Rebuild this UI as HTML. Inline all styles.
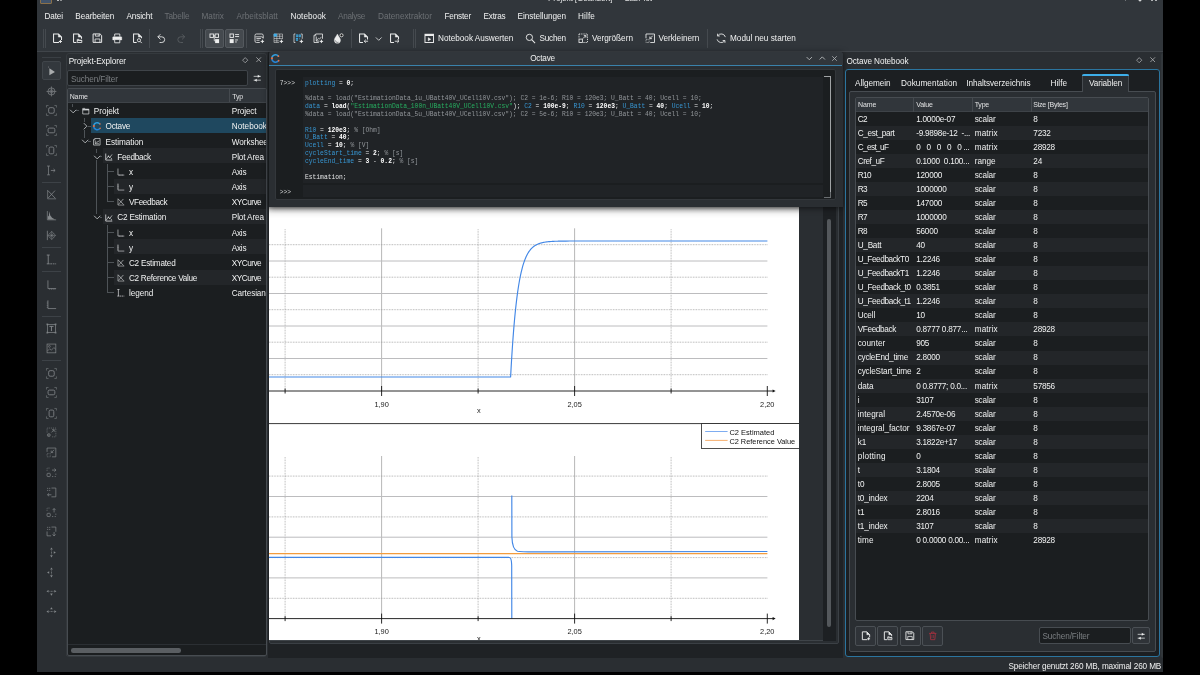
<!DOCTYPE html>
<html><head><meta charset="utf-8"><title>LabPlot</title>
<style>
html,body{margin:0;padding:0;}
body{width:1200px;height:675px;background:#000;overflow:hidden;position:relative;font-family:"Liberation Sans",sans-serif;}
div{position:absolute;box-sizing:border-box;}
svg{position:absolute;overflow:visible;}
.t{position:absolute;white-space:pre;line-height:12px;height:12px;font-family:"Liberation Sans",sans-serif;}
.m{position:absolute;white-space:pre;font-family:"Liberation Mono",monospace;font-size:6.3px;line-height:8px;height:8px;color:#fcfcfc;}

</style></head>
<body>
<div id="gs" style="left:0;top:0;width:1200px;height:675px;will-change:transform;">
<div style="left:37px;top:0px;width:1126px;height:672px;background:#2a2e32;"></div>
<div style="left:37px;top:0px;width:1126px;height:51px;background:#31363b;"></div>
<div style="left:37px;top:51px;width:1126px;height:1px;background:#40454a;"></div>
<span class="t" style="right:38.80px;top:660.50px;font-size:8.2px;color:#f0f1f1;letter-spacing:-0.121px;">Speicher genutzt 260 MB, maximal 260 MB</span>
<div style="left:42px;top:57px;width:19px;height:1px;background:#3a3f44;"></div>
<div style="left:42px;top:61px;width:19px;height:19px;background:#33383d;border:1px solid #40454a;border-radius:2px;"></div>
<div style="left:42px;top:181.5px;width:19px;height:1px;background:#3d4247;"></div>
<div style="left:42px;top:246.5px;width:19px;height:1px;background:#3d4247;"></div>
<div style="left:42px;top:271.0px;width:19px;height:1px;background:#3d4247;"></div>
<div style="left:42px;top:315.5px;width:19px;height:1px;background:#3d4247;"></div>
<div style="left:42px;top:359.5px;width:19px;height:1px;background:#3d4247;"></div>
<div style="left:66px;top:52.5px;width:201px;height:604.5px;background:#2a2e32;border:1px solid #353a3e;border-radius:3px;"></div>
<span class="t" style="left:68.70px;top:55.60px;font-size:8.2px;color:#f0f1f1;letter-spacing:-0.086px;">Projekt-Explorer</span>
<div style="left:66.8px;top:69.6px;width:181.4px;height:16.8px;background:#1b1e20;border:1px solid #3f4449;border-radius:2px;"></div>
<span class="t" style="left:71.00px;top:73.60px;font-size:8.2px;color:#7b7f82;letter-spacing:-0.106px;">Suchen/Filter</span>
<div style="left:66.5px;top:88.2px;width:200.5px;height:568.3px;background:#1b1e20;border:1px solid #474c51;border-radius:2px;overflow:hidden;"></div>
<div style="left:67.5px;top:88.9px;width:198.5px;height:14.2px;background:#31363b;border-bottom:1px solid #3e4348;"></div>
<div style="left:229px;top:88.9px;width:1px;height:13.4px;background:#454a4f;"></div>
<span class="t" style="left:69.70px;top:90.60px;font-size:7.0px;color:#e0e1e2;letter-spacing:-0.121px;">Name</span>
<span class="t" style="left:232.30px;top:90.60px;font-size:7.0px;color:#e0e1e2;letter-spacing:-0.190px;">Typ</span>
<div style="left:65.5px;top:66px;width:1px;height:590px;background:#33373b;"></div>
<div style="left:1161px;top:52.5px;width:2px;height:605px;background:#32373b;border-radius:2px 0 0 2px;"></div>
<div style="left:40px;top:-1px;width:12.2px;height:4.6px;background:#41536a;border:1px solid #8a7049;border-radius:0 0 1px 1px;"></div>
<div style="left:57px;top:0px;width:1.6px;height:1.2px;background:#b9bbbc;"></div>
<div style="left:60.4px;top:0px;width:1.2px;height:1px;background:#8f9294;"></div>
<div style="left:500px;top:0;width:200px;height:4px;overflow:hidden;">
<span class="t" style="left:48.00px;top:-7.30px;font-size:8.2px;color:#dfe0e1;letter-spacing:-0.111px;">Projekt [Geändert] — LabPlot</span>
</div>
<div style="left:1125.2px;top:0px;width:1px;height:0.8px;background:#6f7376;"></div>
<svg style="left:1136px;top:-4px;" width="8" height="6" viewBox="0 0 8 6"><path d="M1 2 L4 5 L7 2" fill="none" stroke="#d5d7d8" stroke-width="1.2"/></svg>
<div style="left:1151.3px;top:0px;width:1.3px;height:1px;background:#b0b3b5;"></div>
<div style="left:1155.3px;top:0px;width:1.3px;height:1px;background:#b0b3b5;"></div>
<span class="t" style="left:44.50px;top:10.80px;font-size:8.2px;color:#f0f1f1;letter-spacing:-0.129px;">Datei</span>
<span class="t" style="left:75.30px;top:10.80px;font-size:8.2px;color:#f0f1f1;letter-spacing:-0.066px;">Bearbeiten</span>
<span class="t" style="left:126.40px;top:10.80px;font-size:8.2px;color:#f0f1f1;letter-spacing:-0.113px;">Ansicht</span>
<span class="t" style="left:164.50px;top:10.80px;font-size:8.2px;color:#6c7074;letter-spacing:-0.141px;">Tabelle</span>
<span class="t" style="left:201.50px;top:10.80px;font-size:8.2px;color:#6c7074;letter-spacing:0.030px;">Matrix</span>
<span class="t" style="left:236.50px;top:10.80px;font-size:8.2px;color:#6c7074;letter-spacing:0.040px;">Arbeitsblatt</span>
<span class="t" style="left:290.50px;top:10.80px;font-size:8.2px;color:#f0f1f1;letter-spacing:0.050px;">Notebook</span>
<span class="t" style="left:338.00px;top:10.80px;font-size:8.2px;color:#6c7074;letter-spacing:-0.310px;">Analyse</span>
<span class="t" style="left:378.00px;top:10.80px;font-size:8.2px;color:#6c7074;letter-spacing:0.016px;">Datenextraktor</span>
<span class="t" style="left:444.50px;top:10.80px;font-size:8.2px;color:#f0f1f1;letter-spacing:-0.186px;">Fenster</span>
<span class="t" style="left:483.50px;top:10.80px;font-size:8.2px;color:#f0f1f1;letter-spacing:-0.207px;">Extras</span>
<span class="t" style="left:517.50px;top:10.80px;font-size:8.2px;color:#f0f1f1;letter-spacing:-0.057px;">Einstellungen</span>
<span class="t" style="left:578.00px;top:10.80px;font-size:8.2px;color:#f0f1f1;letter-spacing:0.119px;">Hilfe</span>
<div style="left:43px;top:28.5px;width:1px;height:19px;background:#454a4f;"></div>
<div style="left:45px;top:28.5px;width:1px;height:19px;background:#454a4f;"></div>
<div style="left:199.8px;top:28.5px;width:1px;height:19px;background:#454a4f;"></div>
<div style="left:201.9px;top:28.5px;width:1px;height:19px;background:#454a4f;"></div>
<div style="left:413px;top:28.5px;width:1px;height:19px;background:#454a4f;"></div>
<div style="left:415px;top:28.5px;width:1px;height:19px;background:#454a4f;"></div>
<div style="left:149.0px;top:28.5px;width:1px;height:19px;background:#454a4f;"></div>
<div style="left:245.8px;top:28.5px;width:1px;height:19px;background:#454a4f;"></div>
<div style="left:350.5px;top:28.5px;width:1px;height:19px;background:#454a4f;"></div>
<div style="left:707.0px;top:28.5px;width:1px;height:19px;background:#454a4f;"></div>
<div style="left:205px;top:28.7px;width:19px;height:19px;background:#44494e;border:1px solid #54595e;border-radius:2px;"></div>
<div style="left:224.8px;top:28.7px;width:19px;height:19px;background:#44494e;border:1px solid #54595e;border-radius:2px;"></div>
<span class="t" style="left:438.00px;top:32.90px;font-size:8.2px;color:#f0f1f1;letter-spacing:-0.010px;">Notebook Auswerten</span>
<span class="t" style="left:539.50px;top:32.90px;font-size:8.2px;color:#f0f1f1;letter-spacing:-0.219px;">Suchen</span>
<span class="t" style="left:592.00px;top:32.90px;font-size:8.2px;color:#f0f1f1;letter-spacing:-0.002px;">Vergrößern</span>
<span class="t" style="left:658.40px;top:32.90px;font-size:8.2px;color:#f0f1f1;letter-spacing:-0.002px;">Verkleinern</span>
<span class="t" style="left:730.00px;top:32.90px;font-size:8.2px;color:#f0f1f1;letter-spacing:0.021px;">Modul neu starten</span>
<div style="left:67.5px;top:103px;width:198.5px;height:540px;overflow:hidden;">
<div style="left:23.5px;top:14.920000000000002px;width:175.0px;height:15.17px;background:#1f485f;"></div>
<div style="left:35.19999999999999px;top:45.25999999999999px;width:163.3px;height:15.17px;background:#232629;"></div>
<div style="left:46.89999999999999px;top:75.6px;width:151.60000000000002px;height:15.17px;background:#232629;"></div>
<div style="left:35.19999999999999px;top:105.94px;width:163.3px;height:15.17px;background:#232629;"></div>
<div style="left:46.89999999999999px;top:136.28px;width:151.60000000000002px;height:15.17px;background:#232629;"></div>
<div style="left:46.89999999999999px;top:166.62px;width:151.60000000000002px;height:15.17px;background:#232629;"></div>
</div>
<span class="t" style="left:93.80px;top:106.28px;font-size:8.2px;color:#f0f1f1;letter-spacing:-0.051px;">Projekt</span>
<span class="t" style="left:105.50px;top:121.45px;font-size:8.2px;color:#f0f1f1;letter-spacing:-0.217px;">Octave</span>
<span class="t" style="left:105.50px;top:136.62px;font-size:8.2px;color:#f0f1f1;letter-spacing:-0.044px;">Estimation</span>
<span class="t" style="left:117.20px;top:151.79px;font-size:8.2px;color:#f0f1f1;letter-spacing:-0.283px;">Feedback</span>
<span class="t" style="left:128.90px;top:166.97px;font-size:8.2px;color:#f0f1f1;">x</span>
<span class="t" style="left:128.90px;top:182.13px;font-size:8.2px;color:#f0f1f1;">y</span>
<span class="t" style="left:128.90px;top:197.30px;font-size:8.2px;color:#f0f1f1;letter-spacing:-0.354px;">VFeedback</span>
<span class="t" style="left:117.20px;top:212.47px;font-size:8.2px;color:#f0f1f1;letter-spacing:-0.162px;">C2 Estimation</span>
<span class="t" style="left:128.90px;top:227.65px;font-size:8.2px;color:#f0f1f1;">x</span>
<span class="t" style="left:128.90px;top:242.81px;font-size:8.2px;color:#f0f1f1;">y</span>
<span class="t" style="left:128.90px;top:257.98px;font-size:8.2px;color:#f0f1f1;letter-spacing:-0.214px;">C2 Estimated</span>
<span class="t" style="left:128.90px;top:273.15px;font-size:8.2px;color:#f0f1f1;letter-spacing:-0.271px;">C2 Reference Value</span>
<span class="t" style="left:128.90px;top:288.32px;font-size:8.2px;color:#f0f1f1;letter-spacing:-0.019px;">legend</span>
<div style="left:229.5px;top:103.5px;width:36.5px;height:200px;overflow:hidden;">
<span class="t" style="left:2.30px;top:2.78px;font-size:8.2px;color:#f0f1f1;letter-spacing:-0.109px;">Project</span>
<span class="t" style="left:2.30px;top:17.95px;font-size:8.2px;color:#f0f1f1;letter-spacing:0.017px;">Notebook</span>
<span class="t" style="left:2.30px;top:33.12px;font-size:8.2px;color:#f0f1f1;letter-spacing:-0.087px;">Worksheet</span>
<span class="t" style="left:2.30px;top:48.29px;font-size:8.2px;color:#f0f1f1;letter-spacing:-0.122px;">Plot Area</span>
<span class="t" style="left:2.30px;top:63.47px;font-size:8.2px;color:#f0f1f1;letter-spacing:-0.263px;">Axis</span>
<span class="t" style="left:2.30px;top:78.63px;font-size:8.2px;color:#f0f1f1;letter-spacing:-0.263px;">Axis</span>
<span class="t" style="left:2.30px;top:93.80px;font-size:8.2px;color:#f0f1f1;letter-spacing:-0.500px;">XYCurve</span>
<span class="t" style="left:2.30px;top:108.97px;font-size:8.2px;color:#f0f1f1;letter-spacing:-0.122px;">Plot Area</span>
<span class="t" style="left:2.30px;top:124.15px;font-size:8.2px;color:#f0f1f1;letter-spacing:-0.263px;">Axis</span>
<span class="t" style="left:2.30px;top:139.31px;font-size:8.2px;color:#f0f1f1;letter-spacing:-0.263px;">Axis</span>
<span class="t" style="left:2.30px;top:154.48px;font-size:8.2px;color:#f0f1f1;letter-spacing:-0.500px;">XYCurve</span>
<span class="t" style="left:2.30px;top:169.65px;font-size:8.2px;color:#f0f1f1;letter-spacing:-0.500px;">XYCurve</span>
<span class="t" style="left:2.30px;top:184.82px;font-size:8.2px;color:#f0f1f1;letter-spacing:-0.131px;">CartesianPlotLegend</span>
</div>
<div style="left:72.3px;top:103.5px;width:1px;height:3.0px;background:#4e5357;"></div>
<div style="left:76px;top:110.335px;width:2.5px;height:1px;background:#4e5357;"></div>
<div style="left:84.1px;top:118.42px;width:1px;height:3.5849999999999937px;background:#4e5357;"></div>
<div style="left:84.1px;top:130.005px;width:1px;height:7.670000000000016px;background:#4e5357;"></div>
<div style="left:88px;top:125.505px;width:2.5px;height:1px;background:#4e5357;"></div>
<div style="left:88px;top:140.675px;width:2.5px;height:1px;background:#4e5357;"></div>
<div style="left:95.9px;top:148.76px;width:1px;height:4.085000000000008px;background:#4e5357;"></div>
<div style="left:95.9px;top:160.345px;width:1px;height:53.18000000000001px;background:#4e5357;"></div>
<div style="left:99.7px;top:155.845px;width:2.299999999999997px;height:1px;background:#4e5357;"></div>
<div style="left:99.7px;top:216.525px;width:2.299999999999997px;height:1px;background:#4e5357;"></div>
<div style="left:107.4px;top:163.93px;width:1px;height:37.92499999999998px;background:#4e5357;"></div>
<div style="left:107.9px;top:171.01500000000001px;width:5.8999999999999915px;height:1px;background:#4e5357;"></div>
<div style="left:107.9px;top:186.185px;width:5.8999999999999915px;height:1px;background:#4e5357;"></div>
<div style="left:107.9px;top:201.355px;width:5.8999999999999915px;height:1px;background:#4e5357;"></div>
<div style="left:107.4px;top:224.61px;width:1px;height:68.26499999999993px;background:#4e5357;"></div>
<div style="left:107.9px;top:231.69500000000002px;width:5.8999999999999915px;height:1px;background:#4e5357;"></div>
<div style="left:107.9px;top:246.865px;width:5.8999999999999915px;height:1px;background:#4e5357;"></div>
<div style="left:107.9px;top:262.03499999999997px;width:5.8999999999999915px;height:1px;background:#4e5357;"></div>
<div style="left:107.9px;top:277.205px;width:5.8999999999999915px;height:1px;background:#4e5357;"></div>
<div style="left:107.9px;top:292.37499999999994px;width:5.8999999999999915px;height:1px;background:#4e5357;"></div>
<div style="left:67.5px;top:644px;width:198.5px;height:1px;background:#2b2f33;"></div>
<div style="left:71px;top:648.3px;width:109.6px;height:4.4px;background:#5a5e62;border-radius:2.2px;"></div>
<div style="left:268px;top:52px;width:575px;height:606px;background:#1f2225;"></div>
<div style="left:268.5px;top:66px;width:570px;height:578px;background:#2a2e32;border:1px solid #3b4045;border-radius:0 0 2px 2px;"></div>
<div style="left:269px;top:66px;width:567px;height:575px;background:#2a2e32;border:1px solid #3f4449;"></div>
<div style="left:269px;top:207px;width:530.2px;height:433.4px;background:#ffffff;"></div>
<div style="left:823px;top:207px;width:12.5px;height:433.5px;background:#1d2023;"></div>
<div style="left:826.6px;top:219px;width:4.6px;height:408px;background:#54585c;border-radius:2.3px;"></div>
<div style="left:268.5px;top:52px;width:574px;height:155px;background:#2a2e32;box-shadow:0 1px 6px rgba(0,0,0,0.6);border-radius:2px 2px 0 0;"></div>
<div style="left:268.5px;top:52px;width:574px;height:13px;background:#31363b;border-radius:2px 2px 0 0;"></div>
<div style="left:269px;top:64.6px;width:573.3px;height:1.5px;background:#3a82ab;"></div>
<span class="t" style="left:530.20px;top:53.30px;font-size:8.2px;color:#f0f1f1;letter-spacing:-0.213px;">Octave</span>
<div style="left:275px;top:69px;width:560.5px;height:131px;background:#1b1e20;border:1px solid #33373b;border-radius:2px;"></div>
<div style="left:303px;top:77px;width:519.5px;height:106.3px;background:#202326;"></div>
<div style="left:303px;top:185px;width:519.5px;height:12px;background:#202326;"></div>
<div style="left:824px;top:76px;width:7px;height:122px;border:1px solid #a0a3a5;border-left:none;border-bottom:none;"></div>
<div style="left:824px;top:191.5px;width:7px;height:6.5px;border-bottom:1px solid #6a6e71;border-right:1px solid #6a6e71;"></div>
<span class="m" style="left:305.0px;top:79.50px;"><span style="color:#3796d2;">plotting</span><span style="color:#e2e3e4;"> = </span><span style="color:#ffffff;font-weight:bold;">0</span><span style="color:#e2e3e4;">;</span></span>
<span class="m" style="left:305.0px;top:95.20px;"><span style="color:#92969a;">%data = load(&quot;EstimationData_1u_UBatt40V_UCell10V.csv&quot;); C2 = 1e-6; R10 = 120e3; U_Batt = 40; Ucell = 10;</span></span>
<span class="m" style="left:305.0px;top:103.05px;"><span style="color:#3796d2;">data</span><span style="color:#e2e3e4;"> = </span><span style="color:#ffffff;font-weight:bold;">load</span><span style="color:#e2e3e4;">(</span><span style="color:#27ae60;">&quot;EstimationData_100n_UBatt40V_UCell10V.csv&quot;</span><span style="color:#e2e3e4;">); </span><span style="color:#3796d2;">C2</span><span style="color:#e2e3e4;"> = </span><span style="color:#ffffff;font-weight:bold;">100e-9</span><span style="color:#e2e3e4;">; </span><span style="color:#3796d2;">R10</span><span style="color:#e2e3e4;"> = </span><span style="color:#ffffff;font-weight:bold;">120e3</span><span style="color:#e2e3e4;">; </span><span style="color:#3796d2;">U_Batt</span><span style="color:#e2e3e4;"> = </span><span style="color:#ffffff;font-weight:bold;">40</span><span style="color:#e2e3e4;">; </span><span style="color:#3796d2;">Ucell</span><span style="color:#e2e3e4;"> = </span><span style="color:#ffffff;font-weight:bold;">10</span><span style="color:#e2e3e4;">;</span></span>
<span class="m" style="left:305.0px;top:110.90px;"><span style="color:#92969a;">%data = load(&quot;EstimationData_5u_UBatt40V_UCell10V.csv&quot;); C2 = 5e-6; R10 = 120e3; U_Batt = 40; Ucell = 10;</span></span>
<span class="m" style="left:305.0px;top:126.60px;"><span style="color:#3796d2;">R10</span><span style="color:#e2e3e4;"> = </span><span style="color:#ffffff;font-weight:bold;">120e3</span><span style="color:#e2e3e4;">; </span><span style="color:#92969a;">% [Ohm]</span></span>
<span class="m" style="left:305.0px;top:134.45px;"><span style="color:#3796d2;">U_Batt</span><span style="color:#e2e3e4;"> = </span><span style="color:#ffffff;font-weight:bold;">40</span><span style="color:#e2e3e4;">;</span></span>
<span class="m" style="left:305.0px;top:142.30px;"><span style="color:#3796d2;">Ucell</span><span style="color:#e2e3e4;"> = </span><span style="color:#ffffff;font-weight:bold;">10</span><span style="color:#e2e3e4;">; </span><span style="color:#92969a;">% [V]</span></span>
<span class="m" style="left:305.0px;top:150.15px;"><span style="color:#3796d2;">cycleStart_time</span><span style="color:#e2e3e4;"> = </span><span style="color:#ffffff;font-weight:bold;">2</span><span style="color:#e2e3e4;">; </span><span style="color:#92969a;">% [s]</span></span>
<span class="m" style="left:305.0px;top:158.00px;"><span style="color:#3796d2;">cycleEnd_time</span><span style="color:#e2e3e4;"> = </span><span style="color:#ffffff;font-weight:bold;">3</span><span style="color:#e2e3e4;"> - </span><span style="color:#ffffff;font-weight:bold;">0.2</span><span style="color:#e2e3e4;">; </span><span style="color:#92969a;">% [s]</span></span>
<span class="m" style="left:305.0px;top:173.70px;"><span style="color:#e2e3e4;">Estimation;</span></span>
<span class="m" style="left:279.8px;top:79.50px;"><span style="color:#d0d2d3;">7&gt;&gt;&gt;</span></span>
<span class="m" style="left:279.8px;top:188.60px;"><span style="color:#d0d2d3;">&gt;&gt;&gt;</span></span>
<span class="t" style="left:846.60px;top:55.60px;font-size:8.2px;color:#f0f1f1;letter-spacing:-0.098px;">Octave Notebook</span>
<div style="left:845px;top:69.2px;width:315.3px;height:587.6px;background:#1c1f22;border:1px solid #2b759f;border-radius:3px;"></div>
<div style="left:849px;top:91px;width:307px;height:561px;background:#2a2e32;border:1px solid #474c51;border-radius:2px;"></div>
<span class="t" style="left:855.00px;top:78.00px;font-size:8.2px;color:#f0f1f1;letter-spacing:-0.035px;">Allgemein</span>
<span class="t" style="left:901.00px;top:78.00px;font-size:8.2px;color:#f0f1f1;letter-spacing:0.088px;">Dokumentation</span>
<span class="t" style="left:966.20px;top:78.00px;font-size:8.2px;color:#f0f1f1;letter-spacing:-0.038px;">Inhaltsverzeichnis</span>
<span class="t" style="left:1050.60px;top:78.00px;font-size:8.2px;color:#f0f1f1;letter-spacing:0.019px;">Hilfe</span>
<div style="left:1082.3px;top:74px;width:46.7px;height:18px;background:#2a2e32;border:1px solid #474c51;border-bottom:none;border-radius:2px 2px 0 0;"></div>
<div style="left:1082.3px;top:74px;width:46.7px;height:1.6px;background:#3daee9;border-radius:2px 2px 0 0;"></div>
<span class="t" style="left:1089.00px;top:78.00px;font-size:8.2px;color:#f0f1f1;letter-spacing:-0.082px;">Variablen</span>
<div style="left:854.7px;top:97.2px;width:294.8px;height:523.5px;background:#1b1e20;border:1px solid #474c51;border-radius:2px;"></div>
<div style="left:855.7px;top:98.2px;width:292.8px;height:13.3px;background:#31363b;"></div>
<div style="left:855.7px;top:111.2px;width:292.8px;height:1px;background:#3e4348;"></div>
<div style="left:913.0px;top:98px;width:1px;height:13.5px;background:#454a4f;"></div>
<div style="left:972.0px;top:98px;width:1px;height:13.5px;background:#454a4f;"></div>
<div style="left:1030.5px;top:98px;width:1px;height:13.5px;background:#454a4f;"></div>
<span class="t" style="left:858.00px;top:99.00px;font-size:7.0px;color:#e0e1e2;letter-spacing:-0.121px;">Name</span>
<span class="t" style="left:916.20px;top:99.00px;font-size:7.0px;color:#e0e1e2;letter-spacing:-0.148px;">Value</span>
<span class="t" style="left:974.70px;top:99.00px;font-size:7.0px;color:#e0e1e2;letter-spacing:-0.206px;">Type</span>
<span class="t" style="left:1033.30px;top:99.00px;font-size:7.0px;color:#e0e1e2;letter-spacing:-0.219px;">Size [Bytes]</span>
<div style="left:855.7px;top:125.703px;width:292.8px;height:14.053px;background:#232629;"></div>
<div style="left:855.7px;top:153.80900000000003px;width:292.8px;height:14.053px;background:#232629;"></div>
<div style="left:855.7px;top:181.91500000000002px;width:292.8px;height:14.053px;background:#232629;"></div>
<div style="left:855.7px;top:210.02100000000002px;width:292.8px;height:14.053px;background:#232629;"></div>
<div style="left:855.7px;top:238.127px;width:292.8px;height:14.053px;background:#232629;"></div>
<div style="left:855.7px;top:266.233px;width:292.8px;height:14.053px;background:#232629;"></div>
<div style="left:855.7px;top:294.33900000000006px;width:292.8px;height:14.053px;background:#232629;"></div>
<div style="left:855.7px;top:322.44500000000005px;width:292.8px;height:14.053px;background:#232629;"></div>
<div style="left:855.7px;top:350.55100000000004px;width:292.8px;height:14.053px;background:#232629;"></div>
<div style="left:855.7px;top:378.65700000000004px;width:292.8px;height:14.053px;background:#232629;"></div>
<div style="left:855.7px;top:406.76300000000003px;width:292.8px;height:14.053px;background:#232629;"></div>
<div style="left:855.7px;top:434.869px;width:292.8px;height:14.053px;background:#232629;"></div>
<div style="left:855.7px;top:462.975px;width:292.8px;height:14.053px;background:#232629;"></div>
<div style="left:855.7px;top:491.081px;width:292.8px;height:14.053px;background:#232629;"></div>
<div style="left:855.7px;top:519.187px;width:292.8px;height:14.053px;background:#232629;"></div>
<span class="t" style="left:857.70px;top:113.53px;font-size:8.2px;color:#f0f1f1;letter-spacing:-0.678px;">C2</span>
<span class="t" style="left:916.20px;top:113.53px;font-size:8.2px;color:#f0f1f1;letter-spacing:-0.239px;">1.0000e-07</span>
<span class="t" style="left:974.70px;top:113.53px;font-size:8.2px;color:#f0f1f1;letter-spacing:-0.169px;">scalar</span>
<span class="t" style="left:1033.30px;top:113.53px;font-size:8.2px;color:#f0f1f1;">8</span>
<span class="t" style="left:857.70px;top:127.58px;font-size:8.2px;color:#f0f1f1;letter-spacing:-0.317px;">C_est_part</span>
<span class="t" style="left:916.20px;top:127.58px;font-size:8.2px;color:#f0f1f1;letter-spacing:-0.255px;">-9.9898e-12  -...</span>
<span class="t" style="left:974.70px;top:127.58px;font-size:8.2px;color:#f0f1f1;letter-spacing:0.142px;">matrix</span>
<span class="t" style="left:1033.30px;top:127.58px;font-size:8.2px;color:#f0f1f1;letter-spacing:-0.225px;">7232</span>
<span class="t" style="left:857.70px;top:141.63px;font-size:8.2px;color:#f0f1f1;letter-spacing:-0.596px;">C_est_uF</span>
<span class="t" style="left:916.20px;top:141.63px;font-size:8.2px;color:#f0f1f1;letter-spacing:-0.279px;">0   0   0   0   0 ...</span>
<span class="t" style="left:974.70px;top:141.63px;font-size:8.2px;color:#f0f1f1;letter-spacing:0.142px;">matrix</span>
<span class="t" style="left:1033.30px;top:141.63px;font-size:8.2px;color:#f0f1f1;letter-spacing:-0.225px;">28928</span>
<span class="t" style="left:857.70px;top:155.69px;font-size:8.2px;color:#f0f1f1;letter-spacing:-0.427px;">Cref_uF</span>
<span class="t" style="left:916.20px;top:155.69px;font-size:8.2px;color:#f0f1f1;letter-spacing:-0.242px;">0.1000  0.100...</span>
<span class="t" style="left:974.70px;top:155.69px;font-size:8.2px;color:#f0f1f1;letter-spacing:-0.024px;">range</span>
<span class="t" style="left:1033.30px;top:155.69px;font-size:8.2px;color:#f0f1f1;letter-spacing:-0.225px;">24</span>
<span class="t" style="left:857.70px;top:169.74px;font-size:8.2px;color:#f0f1f1;letter-spacing:-0.552px;">R10</span>
<span class="t" style="left:916.20px;top:169.74px;font-size:8.2px;color:#f0f1f1;letter-spacing:-0.225px;">120000</span>
<span class="t" style="left:974.70px;top:169.74px;font-size:8.2px;color:#f0f1f1;letter-spacing:-0.169px;">scalar</span>
<span class="t" style="left:1033.30px;top:169.74px;font-size:8.2px;color:#f0f1f1;">8</span>
<span class="t" style="left:857.70px;top:183.79px;font-size:8.2px;color:#f0f1f1;letter-spacing:-0.716px;">R3</span>
<span class="t" style="left:916.20px;top:183.79px;font-size:8.2px;color:#f0f1f1;letter-spacing:-0.225px;">1000000</span>
<span class="t" style="left:974.70px;top:183.79px;font-size:8.2px;color:#f0f1f1;letter-spacing:-0.169px;">scalar</span>
<span class="t" style="left:1033.30px;top:183.79px;font-size:8.2px;color:#f0f1f1;">8</span>
<span class="t" style="left:857.70px;top:197.84px;font-size:8.2px;color:#f0f1f1;letter-spacing:-0.716px;">R5</span>
<span class="t" style="left:916.20px;top:197.84px;font-size:8.2px;color:#f0f1f1;letter-spacing:-0.225px;">147000</span>
<span class="t" style="left:974.70px;top:197.84px;font-size:8.2px;color:#f0f1f1;letter-spacing:-0.169px;">scalar</span>
<span class="t" style="left:1033.30px;top:197.84px;font-size:8.2px;color:#f0f1f1;">8</span>
<span class="t" style="left:857.70px;top:211.90px;font-size:8.2px;color:#f0f1f1;letter-spacing:-0.716px;">R7</span>
<span class="t" style="left:916.20px;top:211.90px;font-size:8.2px;color:#f0f1f1;letter-spacing:-0.225px;">1000000</span>
<span class="t" style="left:974.70px;top:211.90px;font-size:8.2px;color:#f0f1f1;letter-spacing:-0.169px;">scalar</span>
<span class="t" style="left:1033.30px;top:211.90px;font-size:8.2px;color:#f0f1f1;">8</span>
<span class="t" style="left:857.70px;top:225.95px;font-size:8.2px;color:#f0f1f1;letter-spacing:-0.716px;">R8</span>
<span class="t" style="left:916.20px;top:225.95px;font-size:8.2px;color:#f0f1f1;letter-spacing:-0.225px;">56000</span>
<span class="t" style="left:974.70px;top:225.95px;font-size:8.2px;color:#f0f1f1;letter-spacing:-0.169px;">scalar</span>
<span class="t" style="left:1033.30px;top:225.95px;font-size:8.2px;color:#f0f1f1;">8</span>
<span class="t" style="left:857.70px;top:240.00px;font-size:8.2px;color:#f0f1f1;letter-spacing:-0.252px;">U_Batt</span>
<span class="t" style="left:916.20px;top:240.00px;font-size:8.2px;color:#f0f1f1;letter-spacing:-0.225px;">40</span>
<span class="t" style="left:974.70px;top:240.00px;font-size:8.2px;color:#f0f1f1;letter-spacing:-0.169px;">scalar</span>
<span class="t" style="left:1033.30px;top:240.00px;font-size:8.2px;color:#f0f1f1;">8</span>
<span class="t" style="left:857.70px;top:254.06px;font-size:8.2px;color:#f0f1f1;letter-spacing:-0.405px;">U_FeedbackT0</span>
<span class="t" style="left:916.20px;top:254.06px;font-size:8.2px;color:#f0f1f1;letter-spacing:-0.228px;">1.2246</span>
<span class="t" style="left:974.70px;top:254.06px;font-size:8.2px;color:#f0f1f1;letter-spacing:-0.169px;">scalar</span>
<span class="t" style="left:1033.30px;top:254.06px;font-size:8.2px;color:#f0f1f1;">8</span>
<span class="t" style="left:857.70px;top:268.11px;font-size:8.2px;color:#f0f1f1;letter-spacing:-0.405px;">U_FeedbackT1</span>
<span class="t" style="left:916.20px;top:268.11px;font-size:8.2px;color:#f0f1f1;letter-spacing:-0.228px;">1.2246</span>
<span class="t" style="left:974.70px;top:268.11px;font-size:8.2px;color:#f0f1f1;letter-spacing:-0.169px;">scalar</span>
<span class="t" style="left:1033.30px;top:268.11px;font-size:8.2px;color:#f0f1f1;">8</span>
<span class="t" style="left:857.70px;top:282.16px;font-size:8.2px;color:#f0f1f1;letter-spacing:-0.370px;">U_Feedback_t0</span>
<span class="t" style="left:916.20px;top:282.16px;font-size:8.2px;color:#f0f1f1;letter-spacing:-0.228px;">0.3851</span>
<span class="t" style="left:974.70px;top:282.16px;font-size:8.2px;color:#f0f1f1;letter-spacing:-0.169px;">scalar</span>
<span class="t" style="left:1033.30px;top:282.16px;font-size:8.2px;color:#f0f1f1;">8</span>
<span class="t" style="left:857.70px;top:296.22px;font-size:8.2px;color:#f0f1f1;letter-spacing:-0.370px;">U_Feedback_t1</span>
<span class="t" style="left:916.20px;top:296.22px;font-size:8.2px;color:#f0f1f1;letter-spacing:-0.228px;">1.2246</span>
<span class="t" style="left:974.70px;top:296.22px;font-size:8.2px;color:#f0f1f1;letter-spacing:-0.169px;">scalar</span>
<span class="t" style="left:1033.30px;top:296.22px;font-size:8.2px;color:#f0f1f1;">8</span>
<span class="t" style="left:857.70px;top:310.27px;font-size:8.2px;color:#f0f1f1;letter-spacing:-0.172px;">Ucell</span>
<span class="t" style="left:916.20px;top:310.27px;font-size:8.2px;color:#f0f1f1;letter-spacing:-0.225px;">10</span>
<span class="t" style="left:974.70px;top:310.27px;font-size:8.2px;color:#f0f1f1;letter-spacing:-0.169px;">scalar</span>
<span class="t" style="left:1033.30px;top:310.27px;font-size:8.2px;color:#f0f1f1;">8</span>
<span class="t" style="left:857.70px;top:324.32px;font-size:8.2px;color:#f0f1f1;letter-spacing:-0.354px;">VFeedback</span>
<span class="t" style="left:916.20px;top:324.32px;font-size:8.2px;color:#f0f1f1;letter-spacing:-0.238px;">0.8777 0.877...</span>
<span class="t" style="left:974.70px;top:324.32px;font-size:8.2px;color:#f0f1f1;letter-spacing:0.142px;">matrix</span>
<span class="t" style="left:1033.30px;top:324.32px;font-size:8.2px;color:#f0f1f1;letter-spacing:-0.225px;">28928</span>
<span class="t" style="left:857.70px;top:338.37px;font-size:8.2px;color:#f0f1f1;letter-spacing:0.055px;">counter</span>
<span class="t" style="left:916.20px;top:338.37px;font-size:8.2px;color:#f0f1f1;letter-spacing:-0.225px;">905</span>
<span class="t" style="left:974.70px;top:338.37px;font-size:8.2px;color:#f0f1f1;letter-spacing:-0.169px;">scalar</span>
<span class="t" style="left:1033.30px;top:338.37px;font-size:8.2px;color:#f0f1f1;">8</span>
<span class="t" style="left:857.70px;top:352.43px;font-size:8.2px;color:#f0f1f1;letter-spacing:-0.229px;">cycleEnd_time</span>
<span class="t" style="left:916.20px;top:352.43px;font-size:8.2px;color:#f0f1f1;letter-spacing:-0.228px;">2.8000</span>
<span class="t" style="left:974.70px;top:352.43px;font-size:8.2px;color:#f0f1f1;letter-spacing:-0.169px;">scalar</span>
<span class="t" style="left:1033.30px;top:352.43px;font-size:8.2px;color:#f0f1f1;">8</span>
<span class="t" style="left:857.70px;top:366.48px;font-size:8.2px;color:#f0f1f1;letter-spacing:-0.149px;">cycleStart_time</span>
<span class="t" style="left:916.20px;top:366.48px;font-size:8.2px;color:#f0f1f1;">2</span>
<span class="t" style="left:974.70px;top:366.48px;font-size:8.2px;color:#f0f1f1;letter-spacing:-0.169px;">scalar</span>
<span class="t" style="left:1033.30px;top:366.48px;font-size:8.2px;color:#f0f1f1;">8</span>
<span class="t" style="left:857.70px;top:380.53px;font-size:8.2px;color:#f0f1f1;letter-spacing:-0.014px;">data</span>
<span class="t" style="left:916.20px;top:380.53px;font-size:8.2px;color:#f0f1f1;letter-spacing:-0.243px;">0 0.8777; 0.0...</span>
<span class="t" style="left:974.70px;top:380.53px;font-size:8.2px;color:#f0f1f1;letter-spacing:0.142px;">matrix</span>
<span class="t" style="left:1033.30px;top:380.53px;font-size:8.2px;color:#f0f1f1;letter-spacing:-0.225px;">57856</span>
<span class="t" style="left:857.70px;top:394.59px;font-size:8.2px;color:#f0f1f1;">i</span>
<span class="t" style="left:916.20px;top:394.59px;font-size:8.2px;color:#f0f1f1;letter-spacing:-0.225px;">3107</span>
<span class="t" style="left:974.70px;top:394.59px;font-size:8.2px;color:#f0f1f1;letter-spacing:-0.169px;">scalar</span>
<span class="t" style="left:1033.30px;top:394.59px;font-size:8.2px;color:#f0f1f1;">8</span>
<span class="t" style="left:857.70px;top:408.64px;font-size:8.2px;color:#f0f1f1;letter-spacing:0.076px;">integral</span>
<span class="t" style="left:916.20px;top:408.64px;font-size:8.2px;color:#f0f1f1;letter-spacing:-0.239px;">2.4570e-06</span>
<span class="t" style="left:974.70px;top:408.64px;font-size:8.2px;color:#f0f1f1;letter-spacing:-0.169px;">scalar</span>
<span class="t" style="left:1033.30px;top:408.64px;font-size:8.2px;color:#f0f1f1;">8</span>
<span class="t" style="left:857.70px;top:422.69px;font-size:8.2px;color:#f0f1f1;letter-spacing:-0.010px;">integral_factor</span>
<span class="t" style="left:916.20px;top:422.69px;font-size:8.2px;color:#f0f1f1;letter-spacing:-0.239px;">9.3867e-07</span>
<span class="t" style="left:974.70px;top:422.69px;font-size:8.2px;color:#f0f1f1;letter-spacing:-0.169px;">scalar</span>
<span class="t" style="left:1033.30px;top:422.69px;font-size:8.2px;color:#f0f1f1;">8</span>
<span class="t" style="left:857.70px;top:436.75px;font-size:8.2px;color:#f0f1f1;letter-spacing:-0.139px;">k1</span>
<span class="t" style="left:916.20px;top:436.75px;font-size:8.2px;color:#f0f1f1;letter-spacing:-0.256px;">3.1822e+17</span>
<span class="t" style="left:974.70px;top:436.75px;font-size:8.2px;color:#f0f1f1;letter-spacing:-0.169px;">scalar</span>
<span class="t" style="left:1033.30px;top:436.75px;font-size:8.2px;color:#f0f1f1;">8</span>
<span class="t" style="left:857.70px;top:450.80px;font-size:8.2px;color:#f0f1f1;letter-spacing:0.192px;">plotting</span>
<span class="t" style="left:916.20px;top:450.80px;font-size:8.2px;color:#f0f1f1;">0</span>
<span class="t" style="left:974.70px;top:450.80px;font-size:8.2px;color:#f0f1f1;letter-spacing:-0.169px;">scalar</span>
<span class="t" style="left:1033.30px;top:450.80px;font-size:8.2px;color:#f0f1f1;">8</span>
<span class="t" style="left:857.70px;top:464.85px;font-size:8.2px;color:#f0f1f1;">t</span>
<span class="t" style="left:916.20px;top:464.85px;font-size:8.2px;color:#f0f1f1;letter-spacing:-0.228px;">3.1804</span>
<span class="t" style="left:974.70px;top:464.85px;font-size:8.2px;color:#f0f1f1;letter-spacing:-0.169px;">scalar</span>
<span class="t" style="left:1033.30px;top:464.85px;font-size:8.2px;color:#f0f1f1;">8</span>
<span class="t" style="left:857.70px;top:478.90px;font-size:8.2px;color:#f0f1f1;letter-spacing:0.117px;">t0</span>
<span class="t" style="left:916.20px;top:478.90px;font-size:8.2px;color:#f0f1f1;letter-spacing:-0.228px;">2.8005</span>
<span class="t" style="left:974.70px;top:478.90px;font-size:8.2px;color:#f0f1f1;letter-spacing:-0.169px;">scalar</span>
<span class="t" style="left:1033.30px;top:478.90px;font-size:8.2px;color:#f0f1f1;">8</span>
<span class="t" style="left:857.70px;top:492.96px;font-size:8.2px;color:#f0f1f1;letter-spacing:-0.141px;">t0_index</span>
<span class="t" style="left:916.20px;top:492.96px;font-size:8.2px;color:#f0f1f1;letter-spacing:-0.225px;">2204</span>
<span class="t" style="left:974.70px;top:492.96px;font-size:8.2px;color:#f0f1f1;letter-spacing:-0.169px;">scalar</span>
<span class="t" style="left:1033.30px;top:492.96px;font-size:8.2px;color:#f0f1f1;">8</span>
<span class="t" style="left:857.70px;top:507.01px;font-size:8.2px;color:#f0f1f1;letter-spacing:0.117px;">t1</span>
<span class="t" style="left:916.20px;top:507.01px;font-size:8.2px;color:#f0f1f1;letter-spacing:-0.228px;">2.8016</span>
<span class="t" style="left:974.70px;top:507.01px;font-size:8.2px;color:#f0f1f1;letter-spacing:-0.169px;">scalar</span>
<span class="t" style="left:1033.30px;top:507.01px;font-size:8.2px;color:#f0f1f1;">8</span>
<span class="t" style="left:857.70px;top:521.06px;font-size:8.2px;color:#f0f1f1;letter-spacing:-0.141px;">t1_index</span>
<span class="t" style="left:916.20px;top:521.06px;font-size:8.2px;color:#f0f1f1;letter-spacing:-0.225px;">3107</span>
<span class="t" style="left:974.70px;top:521.06px;font-size:8.2px;color:#f0f1f1;letter-spacing:-0.169px;">scalar</span>
<span class="t" style="left:1033.30px;top:521.06px;font-size:8.2px;color:#f0f1f1;">8</span>
<span class="t" style="left:857.70px;top:535.12px;font-size:8.2px;color:#f0f1f1;letter-spacing:0.141px;">time</span>
<span class="t" style="left:916.20px;top:535.12px;font-size:8.2px;color:#f0f1f1;letter-spacing:-0.242px;">0 0.0000 0.00...</span>
<span class="t" style="left:974.70px;top:535.12px;font-size:8.2px;color:#f0f1f1;letter-spacing:0.142px;">matrix</span>
<span class="t" style="left:1033.30px;top:535.12px;font-size:8.2px;color:#f0f1f1;letter-spacing:-0.225px;">28928</span>
<div style="left:855px;top:625.5px;width:21px;height:20.5px;background:#2f3338;border:1px solid #4b5055;border-radius:2px;"></div>
<div style="left:877.3px;top:625.5px;width:21px;height:20.5px;background:#2f3338;border:1px solid #4b5055;border-radius:2px;"></div>
<div style="left:899.6px;top:625.5px;width:21px;height:20.5px;background:#2f3338;border:1px solid #4b5055;border-radius:2px;"></div>
<div style="left:921.9px;top:625.5px;width:21px;height:20.5px;background:#2f3338;border:1px solid #4b5055;border-radius:2px;"></div>
<div style="left:1038.5px;top:627.2px;width:92px;height:17.3px;background:#1b1e20;border:1px solid #474c51;border-radius:2px;"></div>
<span class="t" style="left:1042.50px;top:630.50px;font-size:8.2px;color:#7b7f82;letter-spacing:-0.101px;">Suchen/Filter</span>
<div style="left:1132px;top:627.2px;width:17.8px;height:17.3px;background:#2f3338;border:1px solid #4b5055;border-radius:2px;"></div>
<div style="left:269px;top:207px;width:530.2px;height:433.4px;overflow:hidden;"><svg style="left:-269px;top:-207px;" width="1200" height="675" viewBox="0 0 1200 675" font-family="Liberation Sans, sans-serif"><defs><linearGradient id="sh" x1="0" y1="0" x2="0" y2="1"><stop offset="0" stop-color="#000" stop-opacity="0.38"/><stop offset="0.3" stop-color="#000" stop-opacity="0.13"/><stop offset="0.6" stop-color="#000" stop-opacity="0.04"/><stop offset="1" stop-color="#000" stop-opacity="0"/></linearGradient></defs><rect x="269" y="206.5" width="531" height="12" fill="url(#sh)"/><line x1="381.6" y1="228.3" x2="381.6" y2="391" stroke="#a0a0a0" stroke-width="0.75"/><line x1="574.6" y1="228.3" x2="574.6" y2="391" stroke="#a0a0a0" stroke-width="0.75"/><line x1="285.1" y1="229.3" x2="285.1" y2="391" stroke="#9c9c9c" stroke-width="0.8" stroke-dasharray="0.8 0.8"/><line x1="478.1" y1="229.3" x2="478.1" y2="391" stroke="#9c9c9c" stroke-width="0.8" stroke-dasharray="0.8 0.8"/><line x1="671.1" y1="229.3" x2="671.1" y2="391" stroke="#9c9c9c" stroke-width="0.8" stroke-dasharray="0.8 0.8"/><line x1="269" y1="244.7" x2="767.4" y2="244.7" stroke="#9c9c9c" stroke-width="0.8" stroke-dasharray="0.8 0.8"/><line x1="269" y1="261" x2="767.4" y2="261" stroke="#bcbcbe" stroke-width="1"/><line x1="269" y1="277.2" x2="767.4" y2="277.2" stroke="#9c9c9c" stroke-width="0.8" stroke-dasharray="0.8 0.8"/><line x1="269" y1="293.5" x2="767.4" y2="293.5" stroke="#bcbcbe" stroke-width="1"/><line x1="269" y1="309.7" x2="767.4" y2="309.7" stroke="#9c9c9c" stroke-width="0.8" stroke-dasharray="0.8 0.8"/><line x1="269" y1="326" x2="767.4" y2="326" stroke="#bcbcbe" stroke-width="1"/><line x1="269" y1="342.2" x2="767.4" y2="342.2" stroke="#9c9c9c" stroke-width="0.8" stroke-dasharray="0.8 0.8"/><line x1="269" y1="358.5" x2="767.4" y2="358.5" stroke="#bcbcbe" stroke-width="1"/><line x1="269" y1="374.7" x2="767.4" y2="374.7" stroke="#9c9c9c" stroke-width="0.8" stroke-dasharray="0.8 0.8"/><path d="M269,377 L510.6,377 L510.6,377.0 L511.1,367.88 L511.6,359.36 L512.1,351.42 L512.6,344.02 L513.1,337.1 L513.6,330.66 L514.1,324.64 L514.6,319.03 L515.1,313.8 L515.6,308.91 L516.1,304.36 L516.6,300.11 L517.1,296.14 L517.6,292.44 L518.1,288.99 L518.6,285.77 L519.1,282.77 L519.6,279.96 L520.1,277.35 L520.6,274.91 L521.1,272.64 L521.6,270.51 L522.1,268.53 L522.6,266.69 L523.1,264.96 L523.6,263.36 L524.1,261.86 L524.6,260.46 L525.1,259.15 L525.6,257.93 L526.1,256.8 L526.6,255.74 L527.1,254.75 L527.6,253.83 L528.1,252.97 L528.6,252.16 L529.1,251.41 L529.6,250.72 L530.1,250.06 L530.6,249.46 L531.1,248.89 L531.6,248.36 L532.1,247.87 L532.6,247.41 L533.1,246.98 L533.6,246.57 L534.1,246.2 L534.6,245.85 L535.1,245.53 L535.6,245.22 L536.1,244.94 L536.6,244.67 L537.1,244.43 L537.6,244.2 L538.1,243.98 L538.6,243.78 L539.1,243.6 L539.6,243.42 L540.1,243.26 L540.6,243.11 L541.1,242.97 L541.6,242.84 L542.1,242.71 L542.6,242.6 L543.1,242.49 L543.6,242.39 L544.1,242.3 L544.6,242.21 L545.1,242.13 L545.6,242.05 L546.1,241.98 L546.6,241.92 L547.1,241.85 L547.6,241.8 L548.1,241.74 L548.6,241.69 L549.1,241.65 L549.6,241.6 L550.1,241.56 L550.6,241.53 L551.1,241.49 L551.6,241.46 L552.1,241.43 L552.6,241.4 L553.1,241.37 L553.6,241.35 L554.1,241.32 L554.6,241.3 L555.1,241.28 L555.6,241.26 L556.1,241.24 L556.6,241.23 L557.1,241.21 L557.6,241.2 L558.1,241.19 L558.6,241.17 L559.1,241.16 L559.6,241.15 L560.1,241.14 L560.6,241.13 L561.1,241.12 L561.6,241.11 L562.1,241.11 L562.6,241.1 L563.1,241.09 L563.6,241.09 L564.1,241.08 L564.6,241.08 L565.1,241.07 L565.6,241.07 L566.1,241.06 L566.6,241.06 L567.1,241.05 L567.6,241.05 L568.1,241.05 L568.6,241.04 L569.1,241.04 L569.6,241.04 L570.1,241.04 L570.6,241.03 L571.1,241.03 L571.6,241.03 L572.1,241.03 L572.6,241.02 L573.1,241.02 L573.6,241.02 L574.1,241.02 L574.6,241.02 L575.1,241.02 L575.6,241.02 L576.1,241.02 L576.6,241.01 L577.1,241.01 L577.6,241.01 L578.1,241.01 L578.6,241.01 L579.1,241.01 L579.6,241.01 L580.1,241.01 L580.6,241.01 L581.1,241.01 L581.6,241.01 L582.1,241.01 L582.6,241.01 L583.1,241.01 L583.6,241.01 L584.1,241.01 L584.6,241.0 L767.4,241" fill="none" stroke="#4287e6" stroke-width="1.15" stroke-linejoin="round"/><line x1="269" y1="391" x2="773" y2="391" stroke="#111" stroke-width="0.9"/><path d="M772.6,389.4 L775.6,391 L772.6,392.6 Z" fill="#111"/><line x1="381.6" y1="386" x2="381.6" y2="396" stroke="#111" stroke-width="0.9"/><line x1="574.6" y1="386" x2="574.6" y2="396" stroke="#111" stroke-width="0.9"/><line x1="767.3" y1="386" x2="767.3" y2="396" stroke="#111" stroke-width="0.9"/><line x1="285.1" y1="388.5" x2="285.1" y2="393.5" stroke="#111" stroke-width="0.9"/><line x1="478.1" y1="388.5" x2="478.1" y2="393.5" stroke="#111" stroke-width="0.9"/><line x1="671.1" y1="388.5" x2="671.1" y2="393.5" stroke="#111" stroke-width="0.9"/><text x="381.6" y="406.7" text-anchor="middle" font-size="7.4" fill="#222">1,90</text><text x="574.6" y="406.7" text-anchor="middle" font-size="7.4" fill="#222">2,05</text><text x="767.3" y="406.7" text-anchor="middle" font-size="7.4" fill="#222">2,20</text><text x="478.8" y="413.4" text-anchor="middle" font-size="7.4" fill="#222">x</text><line x1="381.6" y1="456" x2="381.6" y2="618.6" stroke="#a0a0a0" stroke-width="0.75"/><line x1="574.6" y1="456" x2="574.6" y2="618.6" stroke="#a0a0a0" stroke-width="0.75"/><line x1="285.1" y1="457" x2="285.1" y2="618.6" stroke="#9c9c9c" stroke-width="0.8" stroke-dasharray="0.8 0.8"/><line x1="478.1" y1="457" x2="478.1" y2="618.6" stroke="#9c9c9c" stroke-width="0.8" stroke-dasharray="0.8 0.8"/><line x1="671.1" y1="457" x2="671.1" y2="618.6" stroke="#9c9c9c" stroke-width="0.8" stroke-dasharray="0.8 0.8"/><line x1="269" y1="476.1" x2="767.4" y2="476.1" stroke="#9c9c9c" stroke-width="0.8" stroke-dasharray="0.8 0.8"/><line x1="269" y1="496.5" x2="767.4" y2="496.5" stroke="#bcbcbe" stroke-width="1"/><line x1="269" y1="516.9" x2="767.4" y2="516.9" stroke="#9c9c9c" stroke-width="0.8" stroke-dasharray="0.8 0.8"/><line x1="269" y1="537.2" x2="767.4" y2="537.2" stroke="#bcbcbe" stroke-width="1"/><line x1="269" y1="557.6" x2="767.4" y2="557.6" stroke="#9c9c9c" stroke-width="0.8" stroke-dasharray="0.8 0.8"/><line x1="269" y1="577.9" x2="767.4" y2="577.9" stroke="#bcbcbe" stroke-width="1"/><line x1="269" y1="598.3" x2="767.4" y2="598.3" stroke="#9c9c9c" stroke-width="0.8" stroke-dasharray="0.8 0.8"/><line x1="269" y1="553.6" x2="767.4" y2="553.6" stroke="#f39c3d" stroke-width="1.1"/><path d="M269,557.3 L508.5,557.3 C510.6,557.4 511.5,558.5 511.7,566 L511.8,618.6" fill="none" stroke="#4287e6" stroke-width="1.15"/><path d="M511.8,495.5 L511.9,537 C512.2,546 513.6,550 517.5,551.2 C521.5,552 530,552 540,551.9 L767.4,551.5" fill="none" stroke="#4287e6" stroke-width="1.15"/><line x1="269" y1="618.6" x2="773" y2="618.6" stroke="#111" stroke-width="0.9"/><path d="M772.6,617.0 L775.6,618.6 L772.6,620.2 Z" fill="#111"/><line x1="381.6" y1="613.6" x2="381.6" y2="623.6" stroke="#111" stroke-width="0.9"/><line x1="574.6" y1="613.6" x2="574.6" y2="623.6" stroke="#111" stroke-width="0.9"/><line x1="767.3" y1="613.6" x2="767.3" y2="623.6" stroke="#111" stroke-width="0.9"/><line x1="285.1" y1="616.1" x2="285.1" y2="621.1" stroke="#111" stroke-width="0.9"/><line x1="478.1" y1="616.1" x2="478.1" y2="621.1" stroke="#111" stroke-width="0.9"/><line x1="671.1" y1="616.1" x2="671.1" y2="621.1" stroke="#111" stroke-width="0.9"/><text x="381.6" y="634.3000000000001" text-anchor="middle" font-size="7.4" fill="#222">1,90</text><text x="574.6" y="634.3000000000001" text-anchor="middle" font-size="7.4" fill="#222">2,05</text><text x="767.3" y="634.3000000000001" text-anchor="middle" font-size="7.4" fill="#222">2,20</text><text x="478.8" y="641.0" text-anchor="middle" font-size="7.4" fill="#222">x</text><line x1="269" y1="423.6" x2="800" y2="423.6" stroke="#222" stroke-width="0.9"/><rect x="701.4" y="423.6" width="99" height="24.8" fill="#fff" stroke="#222" stroke-width="0.8"/><line x1="705.2" y1="431.5" x2="727.6" y2="431.5" stroke="#6fa3ee" stroke-width="0.9"/><line x1="705.2" y1="440.4" x2="727.6" y2="440.4" stroke="#f5a55c" stroke-width="0.9"/><text x="729.4" y="435.2" font-size="7.7" fill="#111" textLength="45" lengthAdjust="spacingAndGlyphs">C2 Estimated</text><text x="729.4" y="444.2" font-size="7.7" fill="#111" textLength="65.8" lengthAdjust="spacingAndGlyphs">C2 Reference Value</text></svg></div>
<svg style="left:51.05px;top:31.95px;color:#eceded;" width="12.5" height="12.5" viewBox="0 0 22 22" fill="none" stroke="currentColor" stroke-width="1.8" stroke-linecap="butt" stroke-linejoin="miter"><path d="M4.5 18.5 v-15 h8.500 l5.500 5.500 v5"/><path d="M13 3.500 v5.500 h5.500 z" fill="currentColor" stroke-width="0.8"/><path d="M4.5 18.5 h9.500"/><path d="M16.500 14 v5.500 M13.750 16.750 h5.500" stroke-width="1.800"/></svg>
<svg style="left:70.95px;top:31.95px;color:#eceded;" width="12.5" height="12.5" viewBox="0 0 22 22" fill="none" stroke="currentColor" stroke-width="1.8" stroke-linecap="butt" stroke-linejoin="miter"><path d="M4.5 18.5 v-15 h8.500 l5.500 5.500 v3"/><path d="M13 3.500 v5.500 h5.500 z" fill="currentColor" stroke-width="0.8"/><path d="M4.5 18.5 h5"/><path d="M11 18.500 v-5.500 h3 l1 1.500 h4 v4 z" stroke-width="1.500"/><path d="M11 15 h8" stroke-width="1.500"/></svg>
<svg style="left:90.85px;top:31.95px;color:#eceded;" width="12.5" height="12.5" viewBox="0 0 22 22" fill="none" stroke="currentColor" stroke-width="1.8" stroke-linecap="butt" stroke-linejoin="miter"><path d="M3.700 3.400 h12.300 l2.700 2.700 v12.200 h-15 z" stroke-width="1.700"/><path d="M7.700 3.500 v3.800 h7.600 v-3.800" stroke-width="1.400"/><path d="M12.800 4.800 v2" stroke-width="1.300"/><path d="M7.200 18.300 v-6 h8.500 v6" stroke-width="1.400"/></svg>
<svg style="left:110.75px;top:31.95px;color:#eceded;" width="12.5" height="12.5" viewBox="0 0 22 22" fill="none" stroke="currentColor" stroke-width="1.8" stroke-linecap="butt" stroke-linejoin="miter"><path d="M6.500 8 v-4.500 h9 v4.500" stroke-width="1.500"/><path d="M4 8.500 h14 a1 1 0 0 1 1 1 v4.500 h-16 v-4.500 a1 1 0 0 1 1 -1 z" fill="currentColor" stroke-width="0.600"/><path d="M6.500 13 h9 v6 h-9 z" fill="#31363b" stroke-width="1.500"/></svg>
<svg style="left:130.75px;top:31.95px;color:#eceded;" width="12.5" height="12.5" viewBox="0 0 22 22" fill="none" stroke="currentColor" stroke-width="1.8" stroke-linecap="butt" stroke-linejoin="miter"><path d="M4.5 18.5 v-15 h8.500 l5.500 5.500 v2"/><path d="M13 3.500 v5.500 h5.500 z" fill="currentColor" stroke-width="0.8"/><path d="M4.5 18.5 h5.500"/><circle cx="14" cy="14.500" r="2.800" stroke-width="1.500"/><path d="M16 16.500 l3 3" stroke-width="1.600"/></svg>
<svg style="left:155.25px;top:31.95px;color:#eceded;" width="12.5" height="12.5" viewBox="0 0 22 22" fill="none" stroke="currentColor" stroke-width="1.8" stroke-linecap="butt" stroke-linejoin="miter"><g stroke-width="1.500"><path d="M5 8.500 h7 a5 5 0 0 1 0 10 h-4" /><path d="M9.500 4 l-4.500 4.500 l4.500 4.500"/></g></svg>
<svg style="left:175.25px;top:31.95px;color:#5b5f63;" width="12.5" height="12.5" viewBox="0 0 22 22" fill="none" stroke="currentColor" stroke-width="1.8" stroke-linecap="butt" stroke-linejoin="miter"><g stroke-width="1.500"><path d="M17 8.500 h-7 a5 5 0 0 0 0 10 h4" /><path d="M12.500 4 l4.500 4.500 l-4.500 4.500"/></g></svg>
<svg style="left:208.05px;top:31.95px;color:#eceded;" width="12.5" height="12.5" viewBox="0 0 22 22" fill="none" stroke="currentColor" stroke-width="1.8" stroke-linecap="butt" stroke-linejoin="miter"><rect x="3.500" y="3.500" width="6" height="6" stroke-width="1.600"/><rect x="12.500" y="3.500" width="6" height="6" stroke-width="1.600"/><path d="M9.500 6.500 h3 M11 6.500 v9 h2" stroke-width="1.300"/><rect x="12.500" y="12.500" width="7" height="7" fill="currentColor" stroke="none"/></svg>
<svg style="left:228.05px;top:31.95px;color:#eceded;" width="12.5" height="12.5" viewBox="0 0 22 22" fill="none" stroke="currentColor" stroke-width="1.8" stroke-linecap="butt" stroke-linejoin="miter"><rect x="3.500" y="3.500" width="6" height="6" stroke-width="1.600"/><rect x="3" y="12.500" width="7" height="7" fill="currentColor" stroke="none"/><path d="M12.500 4.500 h7 M12.500 8 h7 M12.500 14 h5 M12.500 17.500 h3" stroke-width="1.500"/></svg>
<svg style="left:252.75px;top:31.95px;color:#eceded;" width="12.5" height="12.5" viewBox="0 0 22 22" fill="none" stroke="currentColor" stroke-width="1.8" stroke-linecap="butt" stroke-linejoin="miter"><g stroke-width="1.400"><path d="M3.500 16 v-10 a2.500 2.500 0 0 1 2.500 -2.500 h9.500 a2.500 2.500 0 0 1 2.500 2.500 v5.500"/><path d="M4.500 8.500 h11 a2 2 0 0 1 2 2"/><path d="M6 11.500 h8 M6 14.500 h5.500 M3.500 16 a2.500 2.500 0 0 0 2.500 2.500 h6"/></g><path d="M16.500 13.500 v6 M13.500 16.500 h6" stroke-width="1.700"/></svg>
<svg style="left:272.45px;top:31.95px;color:#eceded;" width="12.5" height="12.5" viewBox="0 0 22 22" fill="none" stroke="currentColor" stroke-width="1.8" stroke-linecap="butt" stroke-linejoin="miter"><path d="M3.500 3.500 h15 v9 M3.500 3.500 v15 h9 M3.500 7.500 h15 M3.500 11.500 h15 M3.500 15.500 h9 M8.500 3.500 v15 M13.500 3.500 v9" stroke-width="1.100" opacity="0.800"/><rect x="3" y="3" width="5.500" height="5" fill="#3daee9" stroke="none"/><path d="M16.500 13.500 v6 M13.500 16.500 h6" stroke-width="1.700"/></svg>
<svg style="left:292.25px;top:31.95px;color:#eceded;" width="12.5" height="12.5" viewBox="0 0 22 22" fill="none" stroke="currentColor" stroke-width="1.8" stroke-linecap="butt" stroke-linejoin="miter"><path d="M6 3.500 h-2.500 v15 h2.500 M15.500 3.500 h2.500 v8.500" stroke-width="1.400" opacity="0.900"/><g stroke="#3daee9" stroke-width="1.300"><rect x="7.500" y="5" width="2.500" height="3.500"/><rect x="12.300" y="5" width="2.500" height="3.500"/><rect x="7.500" y="11.500" width="2.500" height="3.500"/><path d="M13.500 11 v2"/></g><path d="M16.500 13.500 v6 M13.500 16.500 h6" stroke-width="1.700"/></svg>
<svg style="left:312.05px;top:31.95px;color:#eceded;" width="12.5" height="12.5" viewBox="0 0 22 22" fill="none" stroke="currentColor" stroke-width="1.8" stroke-linecap="butt" stroke-linejoin="miter"><g stroke-width="1.400"><path d="M3.500 18.500 v-12 l3 -3 h12 v8.500"/><path d="M3.500 6.500 h3 v-3" stroke-width="1.100"/><path d="M3.500 18.500 h8.500"/><path d="M7.500 8 v8 h5"/><path d="M8 15.500 l3.500 -4.500 l2 1.500 l3 -4" stroke-width="1.200"/></g><path d="M16.500 13.500 v6 M13.500 16.500 h6" stroke-width="1.700"/></svg>
<svg style="left:331.75px;top:31.95px;color:#eceded;" width="12.5" height="12.5" viewBox="0 0 22 22" fill="none" stroke="currentColor" stroke-width="1.8" stroke-linecap="butt" stroke-linejoin="miter"><path d="M9.500 3.500 c-2 4 -5.500 7.500 -5.500 11 a5.500 5.500 0 0 0 11 0 c0 -3.500 -3.500 -7 -5.500 -11 z" fill="currentColor" stroke-width="0.600"/><path d="M6 15 a4 4 0 0 0 5.500 3" stroke="#31363b" stroke-width="1.100"/><circle cx="16.800" cy="5.800" r="2.700" fill="#111" stroke-width="1.500"/></svg>
<svg style="left:356.75px;top:31.95px;color:#eceded;" width="12.5" height="12.5" viewBox="0 0 22 22" fill="none" stroke="currentColor" stroke-width="1.8" stroke-linecap="butt" stroke-linejoin="miter"><path d="M4.5 18.5 v-15 h8.500 l5.500 5.500 v4"/><path d="M13 3.500 v5.500 h5.500 z" fill="currentColor" stroke-width="0.8"/><path d="M4.5 18.5 h6"/><path d="M19.500 16.250 h-6.500 M15.500 13.500 l-2.800 2.750 l2.800 2.750" stroke-width="1.500"/></svg>
<svg style="left:388.35px;top:31.95px;color:#eceded;" width="12.5" height="12.5" viewBox="0 0 22 22" fill="none" stroke="currentColor" stroke-width="1.8" stroke-linecap="butt" stroke-linejoin="miter"><path d="M4.5 18.5 v-15 h8.500 l5.500 5.500 v4"/><path d="M13 3.500 v5.500 h5.500 z" fill="currentColor" stroke-width="0.8"/><path d="M4.5 18.5 h6"/><path d="M12 16.250 h7 M16.500 13.500 l2.800 2.750 l-2.800 2.750" stroke-width="1.500"/></svg>
<svg style="left:422.85px;top:31.95px;color:#eceded;" width="12.5" height="12.5" viewBox="0 0 22 22" fill="none" stroke="currentColor" stroke-width="1.8" stroke-linecap="butt" stroke-linejoin="miter"><rect x="3.500" y="4" width="15" height="14.500" stroke-width="1.700"/><path d="M3.500 5.300 h15" stroke-width="3.400"/><path d="M9 9.800 v6 l5 -3 z" fill="currentColor" stroke-width="0.500"/></svg>
<svg style="left:372.95px;top:32.75px;color:#eceded;" width="11.5" height="11.5" viewBox="0 0 22 22" fill="none" stroke="currentColor" stroke-width="1.5" stroke-linecap="butt" stroke-linejoin="miter"><path d="M5.500 8.500 l5.500 5.500 l5.500 -5.500"/></svg>
<svg style="left:524.45px;top:32.15px;color:#eceded;" width="12.5" height="12.5" viewBox="0 0 22 22" fill="none" stroke="currentColor" stroke-width="1.8" stroke-linecap="butt" stroke-linejoin="miter"><circle cx="9.500" cy="9.500" r="5.500" stroke-width="1.600"/><path d="M13.500 13.500 l6 6" stroke-width="1.800"/></svg>
<svg style="left:576.75px;top:31.95px;color:#eceded;" width="12.5" height="12.5" viewBox="0 0 22 22" fill="none" stroke="currentColor" stroke-width="1.8" stroke-linecap="butt" stroke-linejoin="miter"><g stroke-width="1.500"><path d="M3.500 3.500 h15 v15 h-8" stroke-dasharray="2.200 1.700"/><path d="M3.500 3.500 v8" stroke-dasharray="2.200 1.700"/><rect x="3.500" y="12.500" width="6" height="6"/><path d="M10.500 11.500 l5 -5 M12 6.300 h3.700 v3.700"/></g></svg>
<svg style="left:643.75px;top:31.95px;color:#eceded;" width="12.5" height="12.5" viewBox="0 0 22 22" fill="none" stroke="currentColor" stroke-width="1.8" stroke-linecap="butt" stroke-linejoin="miter"><g stroke-width="1.500"><path d="M3.500 11 v-7.500 h15 v15 h-7.500"/><rect x="3.500" y="13" width="5.500" height="5.500" stroke-dasharray="1.500 1.200" stroke-width="1.100"/><path d="M15.500 6.500 l-5 5 M14 11.700 h-3.700 v-3.700"/></g></svg>
<svg style="left:714.75px;top:31.95px;color:#eceded;" width="12.5" height="12.5" viewBox="0 0 22 22" fill="none" stroke="currentColor" stroke-width="1.8" stroke-linecap="butt" stroke-linejoin="miter"><g stroke-width="1.500"><path d="M18.300 9 a7.500 7.500 0 0 0 -13.500 -2.300"/><path d="M3.700 13 a7.500 7.500 0 0 0 13.500 2.300"/><path d="M4.500 3 v4 h4"/><path d="M17.500 19 v-4 h-4"/></g></svg>
<svg style="left:240.10px;top:54.50px;color:#a6a9ab;" width="10.4" height="10.4" viewBox="0 0 22 22" fill="none" stroke="currentColor" stroke-width="1.7" stroke-linecap="butt" stroke-linejoin="miter"><path d="M11 5.500 l5.500 5.500 l-5.500 5.500 l-5.500 -5.500 z"/></svg>
<svg style="left:1133.90px;top:54.50px;color:#a6a9ab;" width="10.4" height="10.4" viewBox="0 0 22 22" fill="none" stroke="currentColor" stroke-width="1.7" stroke-linecap="butt" stroke-linejoin="miter"><path d="M11 5.500 l5.500 5.500 l-5.500 5.500 l-5.500 -5.500 z"/></svg>
<svg style="left:253.90px;top:54.90px;color:#b4b7b9;" width="9.4" height="9.4" viewBox="0 0 22 22" fill="none" stroke="currentColor" stroke-width="1.8" stroke-linecap="butt" stroke-linejoin="miter"><path d="M5.500 5.500 l11 11 M16.500 5.500 l-11 11"/></svg>
<svg style="left:1147.70px;top:54.90px;color:#b4b7b9;" width="9.4" height="9.4" viewBox="0 0 22 22" fill="none" stroke="currentColor" stroke-width="1.8" stroke-linecap="butt" stroke-linejoin="miter"><path d="M5.500 5.500 l11 11 M16.500 5.500 l-11 11"/></svg>
<svg style="left:270.40px;top:53.00px;color:#eceded;" width="11" height="11" viewBox="0 0 22 22" fill="none" stroke="currentColor" stroke-width="1.8" stroke-linecap="butt" stroke-linejoin="miter"><path d="M3.700 11 A7.300 7.300 0 0 1 16.750 6.500" stroke="#2f9fe0" stroke-width="3"/><path d="M16.750 15.500 A7.300 7.300 0 0 1 3.700 11" stroke="#2586d8" stroke-width="3"/><circle cx="3.900" cy="10.700" r="2.200" fill="#ee6a35" stroke="none"/><circle cx="16.900" cy="6.300" r="1.700" fill="#e9703f" stroke="none"/><circle cx="17.300" cy="15.400" r="1.700" fill="#e9703f" stroke="none"/></svg>
<svg style="left:803.60px;top:52.90px;color:#b0b3b5;" width="10.6" height="10.6" viewBox="0 0 22 22" fill="none" stroke="currentColor" stroke-width="2" stroke-linecap="butt" stroke-linejoin="miter"><path d="M5.500 8.500 l5.500 5.500 l5.500 -5.500"/></svg>
<svg style="left:816.60px;top:53.10px;color:#b0b3b5;" width="10.6" height="10.6" viewBox="0 0 22 22" fill="none" stroke="currentColor" stroke-width="2" stroke-linecap="butt" stroke-linejoin="miter"><path d="M5.500 13.500 l5.500 -5.500 l5.500 5.500"/></svg>
<svg style="left:830.10px;top:54.10px;color:#b0b3b5;" width="9" height="9" viewBox="0 0 22 22" fill="none" stroke="currentColor" stroke-width="2" stroke-linecap="butt" stroke-linejoin="miter"><path d="M5.500 5.500 l11 11 M16.500 5.500 l-11 11"/></svg>
<svg style="left:252.25px;top:73.35px;color:#eceded;" width="10.5" height="10.5" viewBox="0 0 22 22" fill="none" stroke="currentColor" stroke-width="1.8" stroke-linecap="butt" stroke-linejoin="miter"><path d="M3.500 7 h15 M3.500 15 h15" stroke-width="1.500"/><path d="M12 3.800 v6.400 l5 -3.200 z" fill="currentColor" stroke="none"/><path d="M10 11.800 v6.400 l-5 -3.200 z" fill="currentColor" stroke="none"/></svg>
<svg style="left:1135.55px;top:630.75px;color:#eceded;" width="10.5" height="10.5" viewBox="0 0 22 22" fill="none" stroke="currentColor" stroke-width="1.8" stroke-linecap="butt" stroke-linejoin="miter"><path d="M3.500 7 h15 M3.500 15 h15" stroke-width="1.500"/><path d="M12 3.800 v6.400 l5 -3.200 z" fill="currentColor" stroke="none"/><path d="M10 11.800 v6.400 l-5 -3.200 z" fill="currentColor" stroke="none"/></svg>
<svg style="left:859.75px;top:630.25px;color:#eceded;" width="11.5" height="11.5" viewBox="0 0 22 22" fill="none" stroke="currentColor" stroke-width="1.8" stroke-linecap="butt" stroke-linejoin="miter"><path d="M4.5 18.5 v-15 h8.500 l5.500 5.500 v5"/><path d="M13 3.500 v5.500 h5.500 z" fill="currentColor" stroke-width="0.8"/><path d="M4.5 18.5 h9.500"/><path d="M16.500 14 v5.500 M13.750 16.750 h5.500" stroke-width="1.800"/></svg>
<svg style="left:882.05px;top:630.25px;color:#eceded;" width="11.5" height="11.5" viewBox="0 0 22 22" fill="none" stroke="currentColor" stroke-width="1.8" stroke-linecap="butt" stroke-linejoin="miter"><path d="M4.5 18.5 v-15 h8.500 l5.500 5.500 v3"/><path d="M13 3.500 v5.500 h5.500 z" fill="currentColor" stroke-width="0.8"/><path d="M4.5 18.5 h5"/><path d="M11 18.500 v-5.500 h3 l1 1.500 h4 v4 z" stroke-width="1.500"/><path d="M11 15 h8" stroke-width="1.500"/></svg>
<svg style="left:904.35px;top:630.25px;color:#eceded;" width="11.5" height="11.5" viewBox="0 0 22 22" fill="none" stroke="currentColor" stroke-width="1.8" stroke-linecap="butt" stroke-linejoin="miter"><path d="M3.700 3.400 h12.300 l2.700 2.700 v12.200 h-15 z" stroke-width="1.700"/><path d="M7.700 3.500 v3.800 h7.600 v-3.800" stroke-width="1.400"/><path d="M12.800 4.800 v2" stroke-width="1.300"/><path d="M7.200 18.300 v-6 h8.500 v6" stroke-width="1.400"/></svg>
<svg style="left:926.65px;top:630.25px;color:#a8313f;" width="11.5" height="11.5" viewBox="0 0 22 22" fill="none" stroke="currentColor" stroke-width="1.8" stroke-linecap="butt" stroke-linejoin="miter"><path d="M4 6.500 h14 M8.500 6.500 v-2.500 h5 v2.500 M6 6.500 l1 12 h8 l1 -12" stroke-width="1.600"/><path d="M9.500 9.500 v6 M12.500 9.500 v6" stroke-width="1.100"/></svg>
<svg style="left:80.60px;top:106.39px;color:#eceeef;" width="9.6" height="9.6" viewBox="0 0 22 22" fill="none" stroke="currentColor" stroke-width="1.8" stroke-linecap="butt" stroke-linejoin="miter"><path d="M4 5.500 h5 l1.500 1.800 h7.500 v11 h-14 z" stroke-width="1.500"/><path d="M4 8.600 h14" stroke-width="2.600"/></svg>
<svg style="left:67.10px;top:104.98px;color:#c3c6c8;" width="12.4" height="12.4" viewBox="0 0 22 22" fill="none" stroke="currentColor" stroke-width="1.5" stroke-linecap="butt" stroke-linejoin="miter"><path d="M5.500 8.500 l5.500 5.500 l5.500 -5.500"/></svg>
<svg style="left:91.90px;top:121.16px;color:#eceeef;" width="10.4" height="10.4" viewBox="0 0 22 22" fill="none" stroke="currentColor" stroke-width="1.8" stroke-linecap="butt" stroke-linejoin="miter"><path d="M3.700 11 A7.300 7.300 0 0 1 16.750 6.500" stroke="#2f9fe0" stroke-width="3"/><path d="M16.750 15.500 A7.300 7.300 0 0 1 3.700 11" stroke="#2586d8" stroke-width="3"/><circle cx="3.900" cy="10.700" r="2.200" fill="#ee6a35" stroke="none"/><circle cx="16.900" cy="6.300" r="1.700" fill="#e9703f" stroke="none"/><circle cx="17.300" cy="15.400" r="1.700" fill="#e9703f" stroke="none"/></svg>
<svg style="left:79.00px;top:119.95px;color:#c3c6c8;" width="12.4" height="12.4" viewBox="0 0 22 22" fill="none" stroke="currentColor" stroke-width="1.5" stroke-linecap="butt" stroke-linejoin="miter"><path d="M8.500 5.500 l5.500 5.500 l-5.500 5.500"/></svg>
<svg style="left:92.30px;top:136.72px;color:#eceeef;" width="9.6" height="9.6" viewBox="0 0 22 22" fill="none" stroke="currentColor" stroke-width="1.8" stroke-linecap="butt" stroke-linejoin="miter"><path d="M3.500 18.500 v-12 l3 -3 h12 v15 z" stroke-width="1.400"/><path d="M3.500 6.500 h3 v-3" stroke-width="1.200"/><path d="M7.500 8 v7.500 h8.500" stroke-width="1.400"/><path d="M8 15 l3.500 -4.500 l2 1.500 l3 -4" stroke-width="1.200"/></svg>
<svg style="left:78.80px;top:135.33px;color:#c3c6c8;" width="12.4" height="12.4" viewBox="0 0 22 22" fill="none" stroke="currentColor" stroke-width="1.5" stroke-linecap="butt" stroke-linejoin="miter"><path d="M5.500 8.500 l5.500 5.500 l5.500 -5.500"/></svg>
<svg style="left:104.00px;top:151.89px;color:#eceeef;" width="9.6" height="9.6" viewBox="0 0 22 22" fill="none" stroke="currentColor" stroke-width="1.8" stroke-linecap="butt" stroke-linejoin="miter"><path d="M4 3.500 v15 h15" stroke-width="1.700"/><path d="M5 16.500 l5 -7 l3.500 3 l5 -7" stroke-width="1.400"/><circle cx="10" cy="9.500" r="1.300" fill="currentColor" stroke="none"/><circle cx="13.500" cy="12.500" r="1.300" fill="currentColor" stroke="none"/><circle cx="17" cy="15.500" r="1.200" fill="currentColor" stroke="none"/></svg>
<svg style="left:90.50px;top:150.50px;color:#c3c6c8;" width="12.4" height="12.4" viewBox="0 0 22 22" fill="none" stroke="currentColor" stroke-width="1.5" stroke-linecap="butt" stroke-linejoin="miter"><path d="M5.500 8.500 l5.500 5.500 l5.500 -5.500"/></svg>
<svg style="left:115.70px;top:167.06px;color:#eceeef;" width="9.6" height="9.6" viewBox="0 0 22 22" fill="none" stroke="currentColor" stroke-width="1.8" stroke-linecap="butt" stroke-linejoin="miter"><path d="M4.500 3.500 v15 h14.500" stroke-width="1.300"/><path d="M8 17 v3 M11.500 17 v3 M15 17 v3" stroke-width="0.900" opacity="0.700"/></svg>
<svg style="left:115.70px;top:182.23px;color:#eceeef;" width="9.6" height="9.6" viewBox="0 0 22 22" fill="none" stroke="currentColor" stroke-width="1.8" stroke-linecap="butt" stroke-linejoin="miter"><path d="M4.500 3.500 v15 h14.500" stroke-width="1.300"/><path d="M3 7 h3.500 M3 10.500 h3.500 M3 14 h3.500" stroke-width="0.900" opacity="0.700"/></svg>
<svg style="left:115.70px;top:197.40px;color:#eceeef;" width="9.6" height="9.6" viewBox="0 0 22 22" fill="none" stroke="currentColor" stroke-width="1.8" stroke-linecap="butt" stroke-linejoin="miter"><path d="M4.500 3.500 v15 h14.500" stroke-width="1.300" opacity="0.850"/><path d="M5 4.500 l12.500 13 M5.500 17 l11.500 -12.500" stroke-width="1.300"/></svg>
<svg style="left:104.00px;top:212.57px;color:#eceeef;" width="9.6" height="9.6" viewBox="0 0 22 22" fill="none" stroke="currentColor" stroke-width="1.8" stroke-linecap="butt" stroke-linejoin="miter"><path d="M4 3.500 v15 h15" stroke-width="1.700"/><path d="M5 16.500 l5 -7 l3.500 3 l5 -7" stroke-width="1.400"/><circle cx="10" cy="9.500" r="1.300" fill="currentColor" stroke="none"/><circle cx="13.500" cy="12.500" r="1.300" fill="currentColor" stroke="none"/><circle cx="17" cy="15.500" r="1.200" fill="currentColor" stroke="none"/></svg>
<svg style="left:90.50px;top:211.18px;color:#c3c6c8;" width="12.4" height="12.4" viewBox="0 0 22 22" fill="none" stroke="currentColor" stroke-width="1.5" stroke-linecap="butt" stroke-linejoin="miter"><path d="M5.500 8.500 l5.500 5.500 l5.500 -5.500"/></svg>
<svg style="left:115.70px;top:227.75px;color:#eceeef;" width="9.6" height="9.6" viewBox="0 0 22 22" fill="none" stroke="currentColor" stroke-width="1.8" stroke-linecap="butt" stroke-linejoin="miter"><path d="M4.500 3.500 v15 h14.500" stroke-width="1.300"/><path d="M8 17 v3 M11.500 17 v3 M15 17 v3" stroke-width="0.900" opacity="0.700"/></svg>
<svg style="left:115.70px;top:242.91px;color:#eceeef;" width="9.6" height="9.6" viewBox="0 0 22 22" fill="none" stroke="currentColor" stroke-width="1.8" stroke-linecap="butt" stroke-linejoin="miter"><path d="M4.500 3.500 v15 h14.500" stroke-width="1.300"/><path d="M3 7 h3.500 M3 10.500 h3.500 M3 14 h3.500" stroke-width="0.900" opacity="0.700"/></svg>
<svg style="left:115.70px;top:258.08px;color:#eceeef;" width="9.6" height="9.6" viewBox="0 0 22 22" fill="none" stroke="currentColor" stroke-width="1.8" stroke-linecap="butt" stroke-linejoin="miter"><path d="M4.500 3.500 v15 h14.500" stroke-width="1.300" opacity="0.850"/><path d="M5 4.500 l12.500 13 M5.500 17 l11.500 -12.500" stroke-width="1.300"/></svg>
<svg style="left:115.70px;top:273.25px;color:#eceeef;" width="9.6" height="9.6" viewBox="0 0 22 22" fill="none" stroke="currentColor" stroke-width="1.8" stroke-linecap="butt" stroke-linejoin="miter"><path d="M4.500 3.500 v15 h14.500" stroke-width="1.300" opacity="0.850"/><path d="M5 4.500 l12.500 13 M5.500 17 l11.500 -12.500" stroke-width="1.300"/></svg>
<svg style="left:115.70px;top:288.42px;color:#eceeef;" width="9.6" height="9.6" viewBox="0 0 22 22" fill="none" stroke="currentColor" stroke-width="1.8" stroke-linecap="butt" stroke-linejoin="miter"><path d="M5.500 3.500 v15 M3 3.500 h5 M3 18.500 h5" stroke-width="1.500"/><path d="M9 18.500 h10" stroke-width="1.500" stroke-dasharray="3 1.200"/></svg>
<svg style="left:45.15px;top:64.85px;color:#a9acae;" width="12.9" height="12.9" viewBox="0 0 22 22" fill="none" stroke="currentColor" stroke-width="1.3" stroke-linecap="butt" stroke-linejoin="miter"><path d="M7.500 5.500 v12 l9.500 -5.500 z" fill="currentColor" stroke="none"/><circle cx="6" cy="3.500" r="0.800" fill="currentColor" stroke="none"/></svg>
<svg style="left:45.15px;top:84.55px;color:#85898c;" width="12.9" height="12.9" viewBox="0 0 22 22" fill="none" stroke="currentColor" stroke-width="1.3" stroke-linecap="butt" stroke-linejoin="miter"><circle cx="11" cy="11" r="6" stroke-width="1.200"/><circle cx="11" cy="11" r="2.800" stroke-width="1"/><path d="M11 2.500 v17 M2.500 11 h17" stroke-width="1.100"/></svg>
<svg style="left:45.15px;top:104.35px;color:#85898c;" width="12.9" height="12.9" viewBox="0 0 22 22" fill="none" stroke="currentColor" stroke-width="1.3" stroke-linecap="butt" stroke-linejoin="miter"><rect x="6.25" y="6.25" width="9.5" height="9.5" rx="2.500" stroke-width="1.400"/><path d="M2.500 6 v-3.500 h3.500 M16 2.500 h3.500 v3.500 M19.500 16 v3.500 h-3.500 M6 19.500 h-3.500 v-3.500" stroke-width="1.100" opacity="0.850"/></svg>
<svg style="left:45.15px;top:124.15px;color:#85898c;" width="12.9" height="12.9" viewBox="0 0 22 22" fill="none" stroke="currentColor" stroke-width="1.3" stroke-linecap="butt" stroke-linejoin="miter"><rect x="5.25" y="7.0" width="11.5" height="8" rx="2.500" stroke-width="1.400"/><path d="M2.500 6 v-3.500 h3.500 M16 2.500 h3.500 v3.500 M19.500 16 v3.500 h-3.500 M6 19.500 h-3.500 v-3.500" stroke-width="1.100" opacity="0.850"/></svg>
<svg style="left:45.15px;top:143.85px;color:#85898c;" width="12.9" height="12.9" viewBox="0 0 22 22" fill="none" stroke="currentColor" stroke-width="1.3" stroke-linecap="butt" stroke-linejoin="miter"><rect x="7.0" y="5.25" width="8" height="11.5" rx="2.500" stroke-width="1.400"/><path d="M2.500 6 v-3.500 h3.500 M16 2.500 h3.500 v3.500 M19.500 16 v3.500 h-3.500 M6 19.500 h-3.500 v-3.500" stroke-width="1.100" opacity="0.850"/></svg>
<svg style="left:45.15px;top:163.55px;color:#85898c;" width="12.9" height="12.9" viewBox="0 0 22 22" fill="none" stroke="currentColor" stroke-width="1.3" stroke-linecap="butt" stroke-linejoin="miter"><path d="M6 3.500 v15 M3.500 3.500 h5 M3.500 18.500 h5" stroke-width="1.200"/><path d="M10 11 h7 M14.500 8.500 l2.800 2.500 l-2.800 2.500" stroke-width="1.300"/></svg>
<svg style="left:45.15px;top:188.25px;color:#85898c;" width="12.9" height="12.9" viewBox="0 0 22 22" fill="none" stroke="currentColor" stroke-width="1.3" stroke-linecap="butt" stroke-linejoin="miter"><path d="M4.500 3.500 v15 h14.500" stroke-width="1.300" opacity="0.850"/><path d="M5 4.500 l12.500 13 M5.500 17 l11.500 -12.500" stroke-width="1.300"/></svg>
<svg style="left:45.15px;top:208.55px;color:#85898c;" width="12.9" height="12.9" viewBox="0 0 22 22" fill="none" stroke="currentColor" stroke-width="1.3" stroke-linecap="butt" stroke-linejoin="miter"><path d="M4 3.500 v15 h15" stroke-width="1.200"/><path d="M5 18 v-5 l1.500 -1 l1 -8 l1.500 7 l1.500 2 l1.500 2 l3 1.500 l2 1.500 z" fill="currentColor" stroke="none"/></svg>
<svg style="left:45.15px;top:228.55px;color:#85898c;" width="12.9" height="12.9" viewBox="0 0 22 22" fill="none" stroke="currentColor" stroke-width="1.3" stroke-linecap="butt" stroke-linejoin="miter"><path d="M4 3 v16" stroke-width="1.300"/><path d="M5 11 l6.500 -7 l6.500 7 l-6.500 7 z M5 11 h13 M11.500 4 v14 M8 7.500 l7 7 M15 7.500 l-7 7" stroke-width="0.900"/></svg>
<svg style="left:45.15px;top:252.85px;color:#85898c;" width="12.9" height="12.9" viewBox="0 0 22 22" fill="none" stroke="currentColor" stroke-width="1.3" stroke-linecap="butt" stroke-linejoin="miter"><path d="M5.500 3.500 v15 M3 3.500 h5 M3 18.500 h5" stroke-width="1.500"/><path d="M9 18.500 h10" stroke-width="1.500" stroke-dasharray="3 1.200"/></svg>
<svg style="left:45.15px;top:277.55px;color:#85898c;" width="12.9" height="12.9" viewBox="0 0 22 22" fill="none" stroke="currentColor" stroke-width="1.3" stroke-linecap="butt" stroke-linejoin="miter"><path d="M5 4 v14 h14" stroke-width="1.300"/><path d="M8 18 v2 M11 18 v2 M14 18 v2 M17 18 v2" stroke-width="1" /></svg>
<svg style="left:45.15px;top:297.55px;color:#85898c;" width="12.9" height="12.9" viewBox="0 0 22 22" fill="none" stroke="currentColor" stroke-width="1.3" stroke-linecap="butt" stroke-linejoin="miter"><path d="M5 4 v14 h14" stroke-width="1.300"/><path d="M3 7 h2 M3 10 h2 M3 13 h2 M3 16 h2" stroke-width="1"/></svg>
<svg style="left:45.15px;top:322.25px;color:#85898c;" width="12.9" height="12.9" viewBox="0 0 22 22" fill="none" stroke="currentColor" stroke-width="1.3" stroke-linecap="butt" stroke-linejoin="miter"><rect x="4" y="4" width="14" height="14" stroke-width="1.200"/><path d="M7.500 7.500 h7 M11 7.500 v8" stroke-width="1.600"/><path d="M2.500 2.500 h3 v3 h-3 z M16.500 2.500 h3 v3 h-3 z M2.500 16.500 h3 v3 h-3 z M16.500 16.500 h3 v3 h-3 z" fill="currentColor" stroke="none" opacity="0.800"/></svg>
<svg style="left:45.15px;top:341.55px;color:#85898c;" width="12.9" height="12.9" viewBox="0 0 22 22" fill="none" stroke="currentColor" stroke-width="1.3" stroke-linecap="butt" stroke-linejoin="miter"><rect x="3.500" y="3.500" width="15" height="15" stroke-width="1.200"/><circle cx="7.500" cy="7.500" r="1.600" stroke-width="1"/><path d="M4 15.500 l4 -4 l3 2.500 l4 -4.500 l3.500 3" stroke-width="1.100"/></svg>
<svg style="left:45.15px;top:366.75px;color:#85898c;" width="12.9" height="12.9" viewBox="0 0 22 22" fill="none" stroke="currentColor" stroke-width="1.3" stroke-linecap="butt" stroke-linejoin="miter"><rect x="6.25" y="6.25" width="9.5" height="9.5" rx="2.500" stroke-width="1.400"/><path d="M2.500 6 v-3.500 h3.500 M16 2.500 h3.500 v3.500 M19.500 16 v3.500 h-3.500 M6 19.500 h-3.500 v-3.500" stroke-width="1.100" opacity="0.850"/></svg>
<svg style="left:45.15px;top:386.45px;color:#85898c;" width="12.9" height="12.9" viewBox="0 0 22 22" fill="none" stroke="currentColor" stroke-width="1.3" stroke-linecap="butt" stroke-linejoin="miter"><rect x="5.25" y="7.0" width="11.5" height="8" rx="2.500" stroke-width="1.400"/><path d="M2.500 6 v-3.500 h3.500 M16 2.500 h3.500 v3.500 M19.500 16 v3.500 h-3.500 M6 19.500 h-3.500 v-3.500" stroke-width="1.100" opacity="0.850"/></svg>
<svg style="left:45.15px;top:406.55px;color:#85898c;" width="12.9" height="12.9" viewBox="0 0 22 22" fill="none" stroke="currentColor" stroke-width="1.3" stroke-linecap="butt" stroke-linejoin="miter"><rect x="7.0" y="5.25" width="8" height="11.5" rx="2.500" stroke-width="1.400"/><path d="M2.500 6 v-3.500 h3.500 M16 2.500 h3.500 v3.500 M19.500 16 v3.500 h-3.500 M6 19.500 h-3.500 v-3.500" stroke-width="1.100" opacity="0.850"/></svg>
<svg style="left:45.15px;top:426.25px;color:#85898c;" width="12.9" height="12.9" viewBox="0 0 22 22" fill="none" stroke="currentColor" stroke-width="1.3" stroke-linecap="butt" stroke-linejoin="miter"><path d="M3.500 11 v-7.500 h15 v15 h-7.500" stroke-dasharray="1.600 1.900" stroke-width="1.200"/><circle cx="6.500" cy="15.500" r="2.500" stroke-width="1.100"/><path d="M6.500 14 v3 M5 15.500 h3" stroke-width="0.800"/><path d="M11 11 l4.500 -4.500 M12 6.300 h3.700 v3.700" stroke-width="1.200"/></svg>
<svg style="left:45.15px;top:446.15px;color:#85898c;" width="12.9" height="12.9" viewBox="0 0 22 22" fill="none" stroke="currentColor" stroke-width="1.3" stroke-linecap="butt" stroke-linejoin="miter"><path d="M3.500 10 v-6.500 h15 v15 h-6.500" stroke-width="1.200"/><rect x="3.500" y="13" width="5.500" height="5.500" stroke-dasharray="1.300 1.200" stroke-width="1"/><path d="M15.500 6.500 l-4.500 4.500 M14 11.200 h-3.400 v-3.400" stroke-width="1.200"/></svg>
<svg style="left:45.15px;top:466.25px;color:#85898c;" width="12.9" height="12.9" viewBox="0 0 22 22" fill="none" stroke="currentColor" stroke-width="1.3" stroke-linecap="butt" stroke-linejoin="miter"><path d="M3.500 8 v-4.500 h6" stroke-dasharray="1.600 1.900" stroke-width="1.200"/><path d="M12 7 h6.500 M16 4.500 l2.800 2.500 l-2.800 2.500" stroke-width="1.200"/><rect x="3.500" y="12.500" width="5.500" height="5.500" rx="1.200" stroke-width="1.200"/><path d="M12 18 h2 M16.500 18 h2 M18.500 13 v2" stroke-width="1.200"/></svg>
<svg style="left:45.15px;top:485.95px;color:#85898c;" width="12.9" height="12.9" viewBox="0 0 22 22" fill="none" stroke="currentColor" stroke-width="1.3" stroke-linecap="butt" stroke-linejoin="miter"><path d="M11 3.500 h7.500 v15 h-7.500" stroke-width="1.200"/><path d="M3.500 4 h2 M7 4 h2 M3.500 7.500 h2 M7 7.500 h2" stroke-width="1.200"/><path d="M11 15 h-6.500 M7 12.500 l-2.800 2.500 l2.800 2.500" stroke-width="1.200"/></svg>
<svg style="left:45.15px;top:505.55px;color:#85898c;" width="12.9" height="12.9" viewBox="0 0 22 22" fill="none" stroke="currentColor" stroke-width="1.3" stroke-linecap="butt" stroke-linejoin="miter"><path d="M3.500 8 v-4.500 h6" stroke-dasharray="1.600 1.900" stroke-width="1.200"/><path d="M15.500 11 v-6.500 M13 7 l2.500 -2.800 l2.500 2.800" stroke-width="1.200"/><rect x="3.500" y="12.500" width="5.500" height="5.500" rx="1.200" stroke-width="1.200"/><path d="M12 18 h2 M16.500 18 h2 M18.500 13 v2" stroke-width="1.200"/></svg>
<svg style="left:45.15px;top:525.05px;color:#85898c;" width="12.9" height="12.9" viewBox="0 0 22 22" fill="none" stroke="currentColor" stroke-width="1.3" stroke-linecap="butt" stroke-linejoin="miter"><path d="M11 3.500 h7.500 v8" stroke-width="1.200"/><path d="M3.500 4 h2 M7 4 h2 M3.500 7.500 h2 M7 7.500 h2" stroke-width="1.200"/><path d="M3.500 11 v7.500 h7" stroke-width="1.200"/><path d="M15.500 12 v6.500 M13 16 l2.500 2.800 l2.500 -2.800" stroke-width="1.200"/></svg>
<svg style="left:45.15px;top:545.55px;color:#85898c;" width="12.9" height="12.9" viewBox="0 0 22 22" fill="none" stroke="currentColor" stroke-width="1.3" stroke-linecap="butt" stroke-linejoin="miter"><path d="M8.8 6.1 L11 2.5 L13.2 6.1 z" fill="currentColor" stroke="none"/><path d="M8.8 15.9 L11 19.5 L13.2 15.9 z" fill="currentColor" stroke="none"/><path d="M14.9 8.8 L18.5 11 L14.9 13.2 z" fill="currentColor" stroke="none"/><rect x="10.3" y="7.8" width="1.400" height="1.400" fill="currentColor" stroke="none"/><rect x="10.3" y="10.3" width="1.400" height="1.400" fill="currentColor" stroke="none"/><rect x="10.3" y="12.8" width="1.400" height="1.400" fill="currentColor" stroke="none"/></svg>
<svg style="left:45.15px;top:565.75px;color:#85898c;" width="12.9" height="12.9" viewBox="0 0 22 22" fill="none" stroke="currentColor" stroke-width="1.3" stroke-linecap="butt" stroke-linejoin="miter"><path d="M8.8 6.1 L11 2.5 L13.2 6.1 z" fill="currentColor" stroke="none"/><path d="M8.8 15.9 L11 19.5 L13.2 15.9 z" fill="currentColor" stroke="none"/><path d="M7.1 8.8 L3.5 11 L7.1 13.2 z" fill="currentColor" stroke="none"/><rect x="10.3" y="7.8" width="1.400" height="1.400" fill="currentColor" stroke="none"/><rect x="10.3" y="10.3" width="1.400" height="1.400" fill="currentColor" stroke="none"/><rect x="10.3" y="12.8" width="1.400" height="1.400" fill="currentColor" stroke="none"/></svg>
<svg style="left:45.15px;top:586.05px;color:#85898c;" width="12.9" height="12.9" viewBox="0 0 22 22" fill="none" stroke="currentColor" stroke-width="1.3" stroke-linecap="butt" stroke-linejoin="miter"><path d="M6.1 6.8 L2.5 9 L6.1 11.2 z" fill="currentColor" stroke="none"/><path d="M15.9 6.8 L19.5 9 L15.9 11.2 z" fill="currentColor" stroke="none"/><path d="M8.8 12.9 L11 16.5 L13.2 12.9 z" fill="currentColor" stroke="none"/><rect x="7.8" y="8.3" width="1.400" height="1.400" fill="currentColor" stroke="none"/><rect x="10.3" y="8.3" width="1.400" height="1.400" fill="currentColor" stroke="none"/><rect x="12.8" y="8.3" width="1.400" height="1.400" fill="currentColor" stroke="none"/></svg>
<svg style="left:45.15px;top:604.35px;color:#85898c;" width="12.9" height="12.9" viewBox="0 0 22 22" fill="none" stroke="currentColor" stroke-width="1.3" stroke-linecap="butt" stroke-linejoin="miter"><path d="M6.1 10.8 L2.5 13 L6.1 15.2 z" fill="currentColor" stroke="none"/><path d="M15.9 10.8 L19.5 13 L15.9 15.2 z" fill="currentColor" stroke="none"/><path d="M8.8 9.1 L11 5.5 L13.2 9.1 z" fill="currentColor" stroke="none"/><rect x="7.8" y="12.3" width="1.400" height="1.400" fill="currentColor" stroke="none"/><rect x="10.3" y="12.3" width="1.400" height="1.400" fill="currentColor" stroke="none"/><rect x="12.8" y="12.3" width="1.400" height="1.400" fill="currentColor" stroke="none"/></svg>
</div>
</body></html>
